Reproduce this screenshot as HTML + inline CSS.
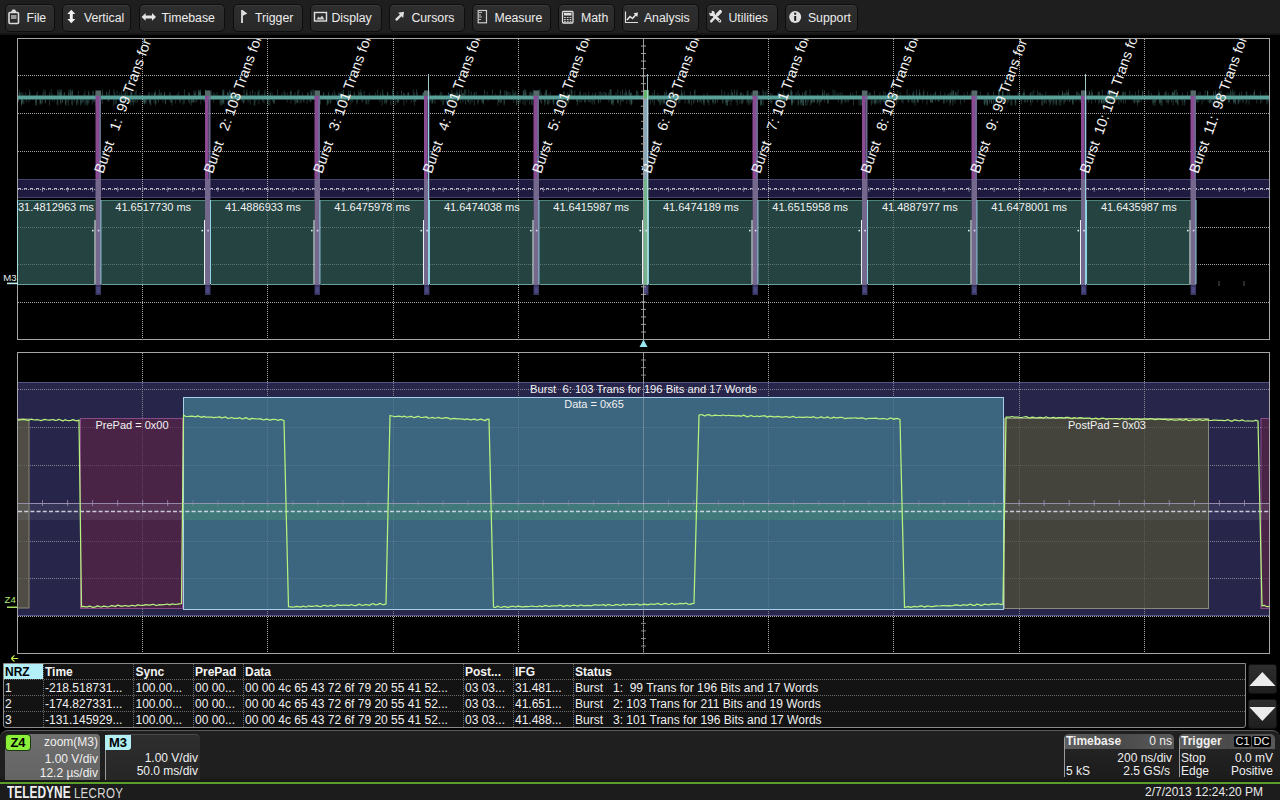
<!DOCTYPE html>
<html><head><meta charset="utf-8">
<style>
*{margin:0;padding:0;box-sizing:border-box}
html,body{width:1280px;height:800px;overflow:hidden;background:#000;font-family:"Liberation Sans",sans-serif;color:#eee}
#menubar{position:absolute;left:0;top:0;width:1280px;height:35px;background:#1e1e1e;border-bottom:2px solid #151515}
.btn{position:absolute;top:4px;height:27.5px;background:linear-gradient(#2e2e2e,#2b2b2b 60%,#272727);border:1.5px solid #0d0d0d;border-radius:5px;box-shadow:inset 0 1px 0 #3c3c3c}
.bt{position:absolute;top:11px;font-size:12.3px;line-height:14px;color:#ececec;white-space:pre}

#tbl{position:absolute;left:3px;top:663px;width:1243px;height:65px;background:#131313;border:1px solid #8a8a8a;border-radius:0 0 3px 3px}
.th{position:absolute;top:665px;font-size:12px;font-weight:bold;line-height:14px;white-space:pre}
.td{position:absolute;font-size:12px;line-height:15px;color:#f0f0f0;white-space:pre}
.vsep{position:absolute;top:664px;height:63px;width:0;border-left:1px dotted #6a6a6a}
.hsep{position:absolute;left:4px;width:1241px;height:0;border-top:1px dotted #6a6a6a}

#bpanel{position:absolute;left:0;top:729.5px;width:1280px;height:52.5px;background:linear-gradient(#1f1f1f 88%,#151515);border-top:1px solid #5a5a5a;border-radius:8px 8px 0 0}
#z4box{position:absolute;left:5px;top:734px;width:95px;height:46px;background:linear-gradient(#6e6e6e,#646464);border-radius:4px 4px 0 0}
#m3box{position:absolute;left:105px;top:734px;width:95px;height:46px;background:linear-gradient(#2e2e2e,#262626);border-radius:5px 5px 0 0;border-left:1px solid #9a9a9a;border-top:1px solid #4a4a4a}
.badge{position:absolute;height:15px;font-size:13px;font-weight:bold;color:#000;text-align:center;line-height:15px;border-radius:3px}
.rt{position:absolute;font-size:12px;color:#f0f0f0;white-space:pre;line-height:14px;text-align:right}
.lt{position:absolute;font-size:12px;color:#f0f0f0;white-space:pre;line-height:14px}
.ibox{position:absolute;top:734px;height:43px;background:linear-gradient(#262626,#1c1c1c);border-left:1px solid #9a9a9a;border-radius:5px 5px 0 0;overflow:hidden}
.ihead{position:absolute;left:0;top:0;width:100%;height:15px;background:linear-gradient(90deg,#5e5e5e,#4a4a4a 50%,#5a5a5a)}
.tag{position:absolute;top:736px;height:11px;background:#000;color:#f0f0f0;font-size:11px;line-height:11px;text-align:center;border-radius:2px}
#gline{position:absolute;left:0;top:782px;width:1280px;height:2px;background:#5c9e2a}
#footer{position:absolute;left:0;top:784px;width:1280px;height:16px;background:#1c1c1c}
#logo{position:absolute;left:7px;top:783.5px;font-size:16px;line-height:17px;color:#f0f0f0;transform:scaleX(.745);transform-origin:0 0;white-space:pre}
.sbtn{position:absolute;left:1248px;width:29px;height:30px;background:linear-gradient(#2e2e2e,#1e1e1e);border:1px solid #111;border-radius:3px}
.sbtn svg{position:absolute;left:0;top:0}
</style></head><body>
<div id="menubar">
<div class="btn" style="left:5px;width:49.5px"></div><div class="bt" style="left:26.4px">File</div>
<div class="btn" style="left:62px;width:69px"></div><div class="bt" style="left:83.9px">Vertical</div>
<div class="btn" style="left:138.5px;width:86.5px"></div><div class="bt" style="left:161.4px">Timebase</div>
<div class="btn" style="left:233px;width:69.5px"></div><div class="bt" style="left:254.9px">Trigger</div>
<div class="btn" style="left:309.5px;width:72.0px"></div><div class="bt" style="left:331.4px">Display</div>
<div class="btn" style="left:389px;width:75.5px"></div><div class="bt" style="left:411.4px">Cursors</div>
<div class="btn" style="left:471.5px;width:79.5px"></div><div class="bt" style="left:494.4px">Measure</div>
<div class="btn" style="left:558px;width:57px"></div><div class="bt" style="left:580.9px">Math</div>
<div class="btn" style="left:621.5px;width:77.0px"></div><div class="bt" style="left:643.9px">Analysis</div>
<div class="btn" style="left:706px;width:71.5px"></div><div class="bt" style="left:728.4px">Utilities</div>
<div class="btn" style="left:785px;width:73px"></div><div class="bt" style="left:807.9px">Support</div>
<svg width="1280" height="34" style="position:absolute;left:0;top:0">
<g fill="none" stroke="#dcdcdc" stroke-width="1.6">
<rect x="9" y="12.5" width="9.5" height="11" rx="1"/>
</g>
<path d="M11,12 L12.5,9.5 L15,9.5 L16.5,12 Z" fill="#dcdcdc"/>
<rect x="11" y="15" width="5.5" height="4" fill="#9a9a9a"/>
<path d="M71.3,9.8 L75.3,14 L72.8,14 L72.8,19 L75.3,19 L71.3,23.2 L67.3,19 L69.8,19 L69.8,14 L67.3,14 Z" fill="#f0f0f0"/>
<path d="M141.6,16.9 L145.6,13 L145.6,15.4 L152,15.4 L152,13 L156,16.9 L152,20.8 L152,18.4 L145.6,18.4 L145.6,20.8 Z" fill="#e6e6e6"/>
<path d="M242,10 L242,23" stroke="#e0e0e0" stroke-width="1.8"/>
<path d="M242.5,10 L247.3,13.5 L242.5,16 Z" fill="#e0e0e0"/>
<rect x="314.5" y="12.5" width="12" height="8.5" fill="none" stroke="#e0e0e0" stroke-width="1.4"/>
<path d="M316.5,19.5 L318.5,16.5 L320,18 L322,15.5 L324.5,19.5 Z" fill="#d0d0d0"/>
<path d="M404,11.8 L398,12.8 L400,14.5 L395,19.2 L396.8,21 L401.5,16.3 L403.2,18 Z" fill="#e0e0e0"/>
<rect x="478.2" y="10.5" width="8.3" height="12.3" fill="none" stroke="#cfcfcf" stroke-width="1.2"/>
<path d="M479,12.5 h3 M479,15 h2 M479,17 h3 M479,19.5 h2" stroke="#bdbdbd" stroke-width="1"/>
<rect x="562.5" y="11.5" width="10.5" height="11.5" rx="1" fill="none" stroke="#e0e0e0" stroke-width="1.3"/>
<rect x="564" y="13" width="7.5" height="2.5" fill="#e0e0e0"/>
<path d="M564,17.5 h7.5 M564,19.5 h7.5 M564,21.3 h7.5" stroke="#d0d0d0" stroke-width="1" stroke-dasharray="1.8 1"/>
<path d="M625.5,11.5 L625.5,22.5 L638,22.5" fill="none" stroke="#dcdcdc" stroke-width="1.2"/>
<path d="M627,20 L630,16.5 L632.5,18.5 L636.5,14" fill="none" stroke="#e6e6e6" stroke-width="1.6"/>
<path d="M633.5,13.2 L638,12.5 L637.3,17 Z" fill="#e6e6e6"/>
<path d="M712.5,14 L719.8,21" stroke="#e4e4e4" stroke-width="3" stroke-linecap="round"/>
<circle cx="712" cy="13.4" r="2.7" fill="#e4e4e4"/>
<circle cx="710.6" cy="11.9" r="1.3" fill="#2c2c2c"/>
<circle cx="719.4" cy="20.5" r="0.8" fill="#2c2c2c"/>
<path d="M720.3,11.6 L717.4,14.6" stroke="#e4e4e4" stroke-width="3.4" stroke-linecap="round"/>
<path d="M715.8,16.2 L711.2,21.4" stroke="#e4e4e4" stroke-width="2.4" stroke-linecap="round"/>
<circle cx="795.2" cy="17" r="6" fill="#e0e0e0"/>
<rect x="794.2" y="16" width="2" height="4.8" fill="#1a1a1a"/>
<rect x="794.2" y="12.7" width="2" height="2" fill="#1a1a1a"/>
</svg>
</div>
<svg width="1280" height="800" viewBox="0 0 1280 800" style="position:absolute;left:0;top:0">
<defs>
<clipPath id="cu"><rect x="18" y="39" width="1251" height="300"/></clipPath>
<clipPath id="cl"><rect x="18" y="353" width="1251" height="300"/></clipPath>
</defs>
<style>
.gd{stroke:#b8b8b8;stroke-width:1;stroke-dasharray:1 1;opacity:.85}
.bd{fill:none;stroke:#a6a6a6;stroke-width:1}
.lbl{font-family:"Liberation Sans",sans-serif;fill:#f2f2f2}
</style>
<g clip-path="url(#cu)">
<rect x="17" y="179" width="1253" height="19" fill="#1f1b40"/>
<line x1="17" y1="179.5" x2="1270" y2="179.5" stroke="#46426e" stroke-width="1"/>
<line x1="17" y1="197.5" x2="1270" y2="197.5" stroke="#46426e" stroke-width="1"/>
<line x1="18" y1="188.5" x2="1269" y2="188.5" stroke="#b8b4d0" stroke-width="1" stroke-dasharray="3 3"/>
<line x1="17.5" y1="187" x2="17.5" y2="192" stroke="#9a96b8" stroke-width="1" opacity=".7"/>
<line x1="42.5" y1="187" x2="42.5" y2="192" stroke="#9a96b8" stroke-width="1" opacity=".7"/>
<line x1="67.6" y1="187" x2="67.6" y2="192" stroke="#9a96b8" stroke-width="1" opacity=".7"/>
<line x1="92.6" y1="187" x2="92.6" y2="192" stroke="#9a96b8" stroke-width="1" opacity=".7"/>
<line x1="117.7" y1="187" x2="117.7" y2="192" stroke="#9a96b8" stroke-width="1" opacity=".7"/>
<line x1="142.7" y1="187" x2="142.7" y2="192" stroke="#9a96b8" stroke-width="1" opacity=".7"/>
<line x1="167.7" y1="187" x2="167.7" y2="192" stroke="#9a96b8" stroke-width="1" opacity=".7"/>
<line x1="192.8" y1="187" x2="192.8" y2="192" stroke="#9a96b8" stroke-width="1" opacity=".7"/>
<line x1="217.8" y1="187" x2="217.8" y2="192" stroke="#9a96b8" stroke-width="1" opacity=".7"/>
<line x1="242.9" y1="187" x2="242.9" y2="192" stroke="#9a96b8" stroke-width="1" opacity=".7"/>
<line x1="267.9" y1="187" x2="267.9" y2="192" stroke="#9a96b8" stroke-width="1" opacity=".7"/>
<line x1="292.9" y1="187" x2="292.9" y2="192" stroke="#9a96b8" stroke-width="1" opacity=".7"/>
<line x1="318.0" y1="187" x2="318.0" y2="192" stroke="#9a96b8" stroke-width="1" opacity=".7"/>
<line x1="343.0" y1="187" x2="343.0" y2="192" stroke="#9a96b8" stroke-width="1" opacity=".7"/>
<line x1="368.1" y1="187" x2="368.1" y2="192" stroke="#9a96b8" stroke-width="1" opacity=".7"/>
<line x1="393.1" y1="187" x2="393.1" y2="192" stroke="#9a96b8" stroke-width="1" opacity=".7"/>
<line x1="418.1" y1="187" x2="418.1" y2="192" stroke="#9a96b8" stroke-width="1" opacity=".7"/>
<line x1="443.2" y1="187" x2="443.2" y2="192" stroke="#9a96b8" stroke-width="1" opacity=".7"/>
<line x1="468.2" y1="187" x2="468.2" y2="192" stroke="#9a96b8" stroke-width="1" opacity=".7"/>
<line x1="493.3" y1="187" x2="493.3" y2="192" stroke="#9a96b8" stroke-width="1" opacity=".7"/>
<line x1="518.3" y1="187" x2="518.3" y2="192" stroke="#9a96b8" stroke-width="1" opacity=".7"/>
<line x1="543.3" y1="187" x2="543.3" y2="192" stroke="#9a96b8" stroke-width="1" opacity=".7"/>
<line x1="568.4" y1="187" x2="568.4" y2="192" stroke="#9a96b8" stroke-width="1" opacity=".7"/>
<line x1="593.4" y1="187" x2="593.4" y2="192" stroke="#9a96b8" stroke-width="1" opacity=".7"/>
<line x1="618.5" y1="187" x2="618.5" y2="192" stroke="#9a96b8" stroke-width="1" opacity=".7"/>
<line x1="643.5" y1="187" x2="643.5" y2="192" stroke="#9a96b8" stroke-width="1" opacity=".7"/>
<line x1="668.5" y1="187" x2="668.5" y2="192" stroke="#9a96b8" stroke-width="1" opacity=".7"/>
<line x1="693.6" y1="187" x2="693.6" y2="192" stroke="#9a96b8" stroke-width="1" opacity=".7"/>
<line x1="718.6" y1="187" x2="718.6" y2="192" stroke="#9a96b8" stroke-width="1" opacity=".7"/>
<line x1="743.7" y1="187" x2="743.7" y2="192" stroke="#9a96b8" stroke-width="1" opacity=".7"/>
<line x1="768.7" y1="187" x2="768.7" y2="192" stroke="#9a96b8" stroke-width="1" opacity=".7"/>
<line x1="793.7" y1="187" x2="793.7" y2="192" stroke="#9a96b8" stroke-width="1" opacity=".7"/>
<line x1="818.8" y1="187" x2="818.8" y2="192" stroke="#9a96b8" stroke-width="1" opacity=".7"/>
<line x1="843.8" y1="187" x2="843.8" y2="192" stroke="#9a96b8" stroke-width="1" opacity=".7"/>
<line x1="868.9" y1="187" x2="868.9" y2="192" stroke="#9a96b8" stroke-width="1" opacity=".7"/>
<line x1="893.9" y1="187" x2="893.9" y2="192" stroke="#9a96b8" stroke-width="1" opacity=".7"/>
<line x1="918.9" y1="187" x2="918.9" y2="192" stroke="#9a96b8" stroke-width="1" opacity=".7"/>
<line x1="944.0" y1="187" x2="944.0" y2="192" stroke="#9a96b8" stroke-width="1" opacity=".7"/>
<line x1="969.0" y1="187" x2="969.0" y2="192" stroke="#9a96b8" stroke-width="1" opacity=".7"/>
<line x1="994.1" y1="187" x2="994.1" y2="192" stroke="#9a96b8" stroke-width="1" opacity=".7"/>
<line x1="1019.1" y1="187" x2="1019.1" y2="192" stroke="#9a96b8" stroke-width="1" opacity=".7"/>
<line x1="1044.1" y1="187" x2="1044.1" y2="192" stroke="#9a96b8" stroke-width="1" opacity=".7"/>
<line x1="1069.2" y1="187" x2="1069.2" y2="192" stroke="#9a96b8" stroke-width="1" opacity=".7"/>
<line x1="1094.2" y1="187" x2="1094.2" y2="192" stroke="#9a96b8" stroke-width="1" opacity=".7"/>
<line x1="1119.3" y1="187" x2="1119.3" y2="192" stroke="#9a96b8" stroke-width="1" opacity=".7"/>
<line x1="1144.3" y1="187" x2="1144.3" y2="192" stroke="#9a96b8" stroke-width="1" opacity=".7"/>
<line x1="1169.3" y1="187" x2="1169.3" y2="192" stroke="#9a96b8" stroke-width="1" opacity=".7"/>
<line x1="1194.4" y1="187" x2="1194.4" y2="192" stroke="#9a96b8" stroke-width="1" opacity=".7"/>
<line x1="1219.4" y1="187" x2="1219.4" y2="192" stroke="#9a96b8" stroke-width="1" opacity=".7"/>
<line x1="1244.5" y1="187" x2="1244.5" y2="192" stroke="#9a96b8" stroke-width="1" opacity=".7"/>
<line x1="1269.5" y1="187" x2="1269.5" y2="192" stroke="#9a96b8" stroke-width="1" opacity=".7"/>
<line x1="142.5" y1="39" x2="142.5" y2="339" class="gd"/>
<line x1="267.5" y1="39" x2="267.5" y2="339" class="gd"/>
<line x1="393.5" y1="39" x2="393.5" y2="339" class="gd"/>
<line x1="518.5" y1="39" x2="518.5" y2="339" class="gd"/>
<line x1="643.5" y1="39" x2="643.5" y2="339" class="gd"/>
<line x1="768.5" y1="39" x2="768.5" y2="339" class="gd"/>
<line x1="893.5" y1="39" x2="893.5" y2="339" class="gd"/>
<line x1="1019.5" y1="39" x2="1019.5" y2="339" class="gd"/>
<line x1="1144.5" y1="39" x2="1144.5" y2="339" class="gd"/>
<line x1="18" y1="75.5" x2="1269" y2="75.5" class="gd"/>
<line x1="18" y1="113.5" x2="1269" y2="113.5" class="gd"/>
<line x1="18" y1="151.5" x2="1269" y2="151.5" class="gd"/>
<line x1="18" y1="189.5" x2="1269" y2="189.5" class="gd"/>
<line x1="18" y1="227.5" x2="1269" y2="227.5" class="gd"/>
<line x1="18" y1="264.5" x2="1269" y2="264.5" class="gd"/>
<line x1="18" y1="302.5" x2="1269" y2="302.5" class="gd"/>
<rect x="17.5" y="200" width="78.0" height="85" fill="#244341"/>
<line x1="17.5" y1="200.5" x2="95.5" y2="200.5" stroke="#4f8480" stroke-width="1"/>
<line x1="17.5" y1="284.5" x2="95.5" y2="284.5" stroke="#6a9e9a" stroke-width="1"/>
<rect x="101.5" y="200" width="103.5" height="85" fill="#244341"/>
<line x1="101.5" y1="200.5" x2="205.0" y2="200.5" stroke="#4f8480" stroke-width="1"/>
<line x1="101.5" y1="284.5" x2="205.0" y2="284.5" stroke="#6a9e9a" stroke-width="1"/>
<rect x="211.0" y="200" width="103.5" height="85" fill="#244341"/>
<line x1="211.0" y1="200.5" x2="314.5" y2="200.5" stroke="#4f8480" stroke-width="1"/>
<line x1="211.0" y1="284.5" x2="314.5" y2="284.5" stroke="#6a9e9a" stroke-width="1"/>
<rect x="320.5" y="200" width="103.5" height="85" fill="#244341"/>
<line x1="320.5" y1="200.5" x2="424.0" y2="200.5" stroke="#4f8480" stroke-width="1"/>
<line x1="320.5" y1="284.5" x2="424.0" y2="284.5" stroke="#6a9e9a" stroke-width="1"/>
<rect x="430.0" y="200" width="103.5" height="85" fill="#244341"/>
<line x1="430.0" y1="200.5" x2="533.5" y2="200.5" stroke="#4f8480" stroke-width="1"/>
<line x1="430.0" y1="284.5" x2="533.5" y2="284.5" stroke="#6a9e9a" stroke-width="1"/>
<rect x="539.5" y="200" width="103.5" height="85" fill="#244341"/>
<line x1="539.5" y1="200.5" x2="643.0" y2="200.5" stroke="#4f8480" stroke-width="1"/>
<line x1="539.5" y1="284.5" x2="643.0" y2="284.5" stroke="#6a9e9a" stroke-width="1"/>
<rect x="649.0" y="200" width="103.5" height="85" fill="#244341"/>
<line x1="649.0" y1="200.5" x2="752.5" y2="200.5" stroke="#4f8480" stroke-width="1"/>
<line x1="649.0" y1="284.5" x2="752.5" y2="284.5" stroke="#6a9e9a" stroke-width="1"/>
<rect x="758.5" y="200" width="103.5" height="85" fill="#244341"/>
<line x1="758.5" y1="200.5" x2="862.0" y2="200.5" stroke="#4f8480" stroke-width="1"/>
<line x1="758.5" y1="284.5" x2="862.0" y2="284.5" stroke="#6a9e9a" stroke-width="1"/>
<rect x="868.0" y="200" width="103.5" height="85" fill="#244341"/>
<line x1="868.0" y1="200.5" x2="971.5" y2="200.5" stroke="#4f8480" stroke-width="1"/>
<line x1="868.0" y1="284.5" x2="971.5" y2="284.5" stroke="#6a9e9a" stroke-width="1"/>
<rect x="977.5" y="200" width="103.5" height="85" fill="#244341"/>
<line x1="977.5" y1="200.5" x2="1081.0" y2="200.5" stroke="#4f8480" stroke-width="1"/>
<line x1="977.5" y1="284.5" x2="1081.0" y2="284.5" stroke="#6a9e9a" stroke-width="1"/>
<rect x="1087.0" y="200" width="103.5" height="85" fill="#244341"/>
<line x1="1087.0" y1="200.5" x2="1190.5" y2="200.5" stroke="#4f8480" stroke-width="1"/>
<line x1="1087.0" y1="284.5" x2="1190.5" y2="284.5" stroke="#6a9e9a" stroke-width="1"/>
<line x1="142.5" y1="39" x2="142.5" y2="339" class="gd" style="opacity:.4"/>
<line x1="267.5" y1="39" x2="267.5" y2="339" class="gd" style="opacity:.4"/>
<line x1="393.5" y1="39" x2="393.5" y2="339" class="gd" style="opacity:.4"/>
<line x1="518.5" y1="39" x2="518.5" y2="339" class="gd" style="opacity:.4"/>
<line x1="643.5" y1="39" x2="643.5" y2="339" class="gd" style="opacity:.4"/>
<line x1="768.5" y1="39" x2="768.5" y2="339" class="gd" style="opacity:.4"/>
<line x1="893.5" y1="39" x2="893.5" y2="339" class="gd" style="opacity:.4"/>
<line x1="1019.5" y1="39" x2="1019.5" y2="339" class="gd" style="opacity:.4"/>
<line x1="1144.5" y1="39" x2="1144.5" y2="339" class="gd" style="opacity:.4"/>
<line x1="18" y1="75.5" x2="1269" y2="75.5" class="gd" style="opacity:.4"/>
<line x1="18" y1="113.5" x2="1269" y2="113.5" class="gd" style="opacity:.4"/>
<line x1="18" y1="151.5" x2="1269" y2="151.5" class="gd" style="opacity:.4"/>
<line x1="18" y1="189.5" x2="1269" y2="189.5" class="gd" style="opacity:.4"/>
<line x1="18" y1="227.5" x2="1269" y2="227.5" class="gd" style="opacity:.4"/>
<line x1="18" y1="264.5" x2="1269" y2="264.5" class="gd" style="opacity:.4"/>
<line x1="18" y1="302.5" x2="1269" y2="302.5" class="gd" style="opacity:.4"/>
<line x1="1219" y1="281" x2="1219" y2="286" stroke="#555" stroke-width="1"/><line x1="1244" y1="281" x2="1244" y2="286" stroke="#555" stroke-width="1"/>
<path d="M423.1 92.5v3M78.4 90.5v5M747.1 90.5v5M125.5 91.5v4M131.5 91.5v4M725.4 99.5v3M747.3 99.5v2M514.2 92.5v3M1091.9 92.5v3M694.4 90.5v5M1039.0 92.5v3M732.6 92.5v3M703.2 99.5v2M792.4 99.5v4M552.9 99.5v3M1173.2 92.5v3M1011.8 99.5v6M120.4 99.5v3M1112.8 89.5v6M779.8 93.5v2M541.1 92.5v3M629.7 99.5v2M115.1 99.5v5M1113.2 92.5v3M456.1 99.5v4M588.7 99.5v2M611.1 89.5v6M932.7 99.5v3M1260.4 91.5v4M500.6 89.5v6M1194.8 92.5v3M164.5 93.5v2M377.6 89.5v6M507.1 91.5v4M579.9 90.5v5M189.3 99.5v4M366.3 99.5v4M872.1 99.5v4M206.8 92.5v3M841.8 99.5v2M755.0 92.5v3M200.2 90.5v5M726.5 99.5v3M662.9 99.5v5M943.5 99.5v4M993.7 99.5v6M508.9 91.5v4M620.4 91.5v4M102.3 92.5v3M155.5 90.5v5M18.3 99.5v3M1205.1 90.5v5M1111.8 90.5v5M811.6 99.5v3M611.2 99.5v2M1260.4 99.5v4M408.1 92.5v3M446.6 99.5v3M883.8 90.5v5M1207.7 90.5v5M881.3 99.5v2M390.9 99.5v6M888.9 99.5v3M1154.2 99.5v3M684.3 90.5v5M297.0 99.5v3M1041.7 99.5v6M268.1 91.5v4M54.3 99.5v2M608.8 99.5v3M1214.6 99.5v4M922.6 99.5v3M474.2 92.5v3M606.1 92.5v3M798.7 99.5v5M617.8 89.5v6M822.6 89.5v6M504.1 99.5v6M616.0 92.5v3M813.4 99.5v2M1233.5 99.5v4M947.9 99.5v2M230.7 92.5v3M757.1 99.5v4M200.9 99.5v5M840.2 92.5v3M703.9 93.5v2M1232.6 89.5v6M955.6 92.5v3M1108.6 92.5v3M284.2 90.5v5M751.6 99.5v3M1061.6 99.5v2M460.6 99.5v4M1037.6 90.5v5M1166.1 90.5v5M207.9 90.5v5M568.6 99.5v3M988.8 92.5v3M610.3 89.5v6M95.3 99.5v6M712.9 99.5v2M89.1 92.5v3M984.1 99.5v5M52.9 93.5v2M784.3 99.5v5M267.5 99.5v3M685.1 99.5v4M327.8 99.5v5M1196.7 99.5v3M1134.8 99.5v3M189.6 93.5v2M413.3 89.5v6M109.5 89.5v6M171.1 99.5v3M823.0 92.5v3M1122.4 91.5v4M1209.6 99.5v4M221.7 99.5v6M220.0 99.5v4M523.2 91.5v4M416.5 89.5v6M440.8 91.5v4M40.6 99.5v3M387.6 93.5v2M1167.1 99.5v3M149.1 92.5v3M1151.3 92.5v3M180.1 99.5v4M863.6 92.5v3M689.3 99.5v5M894.2 93.5v2M1018.3 92.5v3M108.6 99.5v2M1020.8 99.5v2M296.2 99.5v3M585.7 99.5v3M540.6 99.5v3M72.1 89.5v6M154.9 92.5v3M244.6 99.5v3M682.4 92.5v3M643.6 92.5v3M1023.4 92.5v3M41.1 99.5v5M255.0 91.5v4M577.3 99.5v6M558.7 99.5v4M1129.8 90.5v5M287.2 92.5v3M1059.2 99.5v6M192.8 99.5v3M1065.1 93.5v2M944.9 92.5v3M87.3 99.5v6M1107.0 99.5v6M767.1 89.5v6M592.8 92.5v3M22.5 99.5v3M1234.8 90.5v5M61.1 92.5v3M246.9 92.5v3M611.8 99.5v5M328.5 93.5v2M1040.1 92.5v3M70.1 93.5v2M805.7 99.5v2M680.0 99.5v3M913.7 90.5v5M426.0 91.5v4M923.9 89.5v6M1049.9 99.5v6M802.8 99.5v6M650.4 99.5v5M729.2 99.5v2M748.7 99.5v6M885.4 92.5v3M70.4 89.5v6M149.3 99.5v4M803.3 99.5v6M323.9 92.5v3M1015.9 99.5v6M1141.2 99.5v2M100.6 99.5v6M1030.3 92.5v3M964.3 99.5v3M1238.6 99.5v4M114.0 89.5v6M76.5 99.5v6M114.9 92.5v3M833.1 89.5v6M728.3 99.5v2M625.7 89.5v6M290.3 91.5v4M664.2 99.5v4M977.7 90.5v5M1241.6 91.5v4M592.2 99.5v5M580.3 92.5v3M1164.6 92.5v3M131.0 99.5v6M1209.9 99.5v3M808.2 99.5v3M897.9 99.5v3M1114.1 91.5v4M22.5 99.5v4M525.2 89.5v6M448.3 92.5v3M432.5 99.5v3M1067.7 99.5v2M262.9 99.5v2M380.6 92.5v3M506.1 90.5v5M1175.7 99.5v3M369.1 99.5v2M375.3 92.5v3M350.4 90.5v5M985.3 99.5v4M1033.8 89.5v6M1113.5 99.5v5M918.2 99.5v2M532.0 99.5v5M824.3 99.5v3M1158.8 90.5v5M608.7 92.5v3M337.9 99.5v6M343.5 89.5v6M622.5 89.5v6M227.3 92.5v3M644.3 99.5v4M584.7 99.5v3M580.9 99.5v3M323.4 92.5v3M132.0 92.5v3M1030.5 99.5v3M955.8 91.5v4M951.0 92.5v3M441.1 99.5v2M736.4 92.5v3M647.7 99.5v6M1079.6 93.5v2M328.8 99.5v4M558.2 99.5v3M1110.0 93.5v2M549.9 99.5v4M630.8 93.5v2M1177.5 99.5v5M1234.3 99.5v3M298.0 99.5v3M871.3 99.5v6M1077.0 91.5v4M989.9 99.5v2M309.0 99.5v2M398.0 99.5v3M678.8 99.5v4M158.3 93.5v2M1198.4 92.5v3M297.7 90.5v5M690.4 91.5v4M413.8 99.5v3M311.7 92.5v3M533.2 89.5v6M45.3 99.5v4M827.6 93.5v2M852.9 92.5v3M60.7 99.5v3M471.3 91.5v4M1015.1 99.5v6M102.4 99.5v4M408.0 92.5v3M295.0 92.5v3M798.1 90.5v5M297.4 99.5v4M88.6 90.5v5M510.2 92.5v3M763.8 91.5v4M93.2 91.5v4M908.8 99.5v3M1265.9 92.5v3M250.1 99.5v5M57.9 99.5v6M1067.7 92.5v3M154.3 93.5v2M457.7 99.5v2M967.3 91.5v4M1045.8 91.5v4M900.3 92.5v3M1168.3 92.5v3M940.4 91.5v4M531.9 99.5v6M68.9 99.5v2M1023.0 93.5v2M952.9 90.5v5M358.7 90.5v5M951.8 89.5v6M362.8 99.5v2M763.1 99.5v6M99.7 92.5v3M913.2 99.5v4M501.5 99.5v3M1037.3 99.5v3M246.9 89.5v6M883.8 99.5v3M428.1 99.5v3M998.6 90.5v5M264.8 92.5v3M99.0 99.5v2M699.3 99.5v3M1123.2 93.5v2M123.2 93.5v2M1254.5 91.5v4M184.3 99.5v4M861.3 99.5v6M986.1 99.5v2M385.7 99.5v3M484.6 89.5v6M567.7 92.5v3M209.8 90.5v5M99.1 99.5v3M652.7 99.5v3M143.8 99.5v4M146.0 99.5v4M307.1 99.5v4M68.5 92.5v3M81.0 99.5v5M747.6 93.5v2M1101.5 99.5v4M987.5 99.5v6M150.3 99.5v5M455.5 93.5v2M194.9 99.5v3M65.8 99.5v6M272.5 99.5v2M529.7 92.5v3M408.6 92.5v3M638.0 91.5v4M144.8 99.5v4M211.3 90.5v5M222.8 89.5v6M1254.3 89.5v6M1210.4 99.5v3M1123.5 91.5v4M1099.2 99.5v3M506.8 91.5v4M25.4 92.5v3M1044.3 99.5v4M474.3 92.5v3M82.7 99.5v3M1156.2 99.5v2M1178.0 99.5v6M200.5 92.5v3M232.9 93.5v2M631.6 92.5v3M1065.5 99.5v2M621.9 99.5v2M814.1 99.5v2M794.0 99.5v3M1089.6 90.5v5M1076.8 91.5v4M290.9 99.5v4M213.8 92.5v3M327.1 99.5v6M258.9 99.5v5M859.0 99.5v6M165.3 99.5v5M1080.1 99.5v3M403.6 92.5v3M842.2 99.5v4M241.6 99.5v2M630.4 92.5v3M791.8 99.5v4M1032.0 91.5v4M178.7 91.5v4M1021.7 99.5v5M69.0 89.5v6M1171.6 99.5v3M657.9 99.5v2M1137.5 99.5v6M188.4 99.5v2M933.8 93.5v2M1246.1 91.5v4M1032.6 99.5v3M920.1 92.5v3M457.0 92.5v3M1139.6 99.5v3M589.0 99.5v3M1168.8 99.5v3M788.4 92.5v3M64.1 92.5v3M814.4 99.5v3M1138.2 99.5v3M348.7 90.5v5M1091.7 99.5v4M743.6 93.5v2M688.2 99.5v4M482.7 99.5v4M740.3 92.5v3M119.8 92.5v3M948.2 93.5v2M663.6 99.5v3M1249.1 99.5v5M1138.5 89.5v6M60.3 92.5v3M800.6 99.5v4M1138.3 99.5v3M784.3 93.5v2M21.3 92.5v3M672.4 90.5v5M748.1 90.5v5M476.2 91.5v4M35.7 99.5v3M582.0 99.5v2M1108.0 92.5v3M348.6 93.5v2M1044.9 99.5v3M741.7 99.5v5M935.6 92.5v3M18.5 99.5v2M525.9 92.5v3M1158.6 93.5v2M707.2 92.5v3M267.6 99.5v5M828.1 99.5v4M236.5 92.5v3M801.1 99.5v6M913.0 93.5v2M564.2 91.5v4M838.1 92.5v3M149.7 99.5v3M172.2 99.5v6M1197.5 99.5v3M350.8 99.5v5M875.9 99.5v5M387.8 92.5v3M652.8 92.5v3M313.4 89.5v6M217.1 92.5v3M504.3 90.5v5M1153.4 99.5v6M1246.1 99.5v5M1068.5 89.5v6M51.2 89.5v6M1124.8 92.5v3M750.3 99.5v5M198.9 93.5v2M796.1 92.5v3M195.4 93.5v2M191.1 99.5v6M890.0 89.5v6M1089.5 92.5v3M1212.2 99.5v5M100.5 99.5v6M152.0 92.5v3M60.4 89.5v6M958.0 89.5v6M142.9 99.5v2M826.5 92.5v3M548.1 93.5v2M1181.6 99.5v2M478.4 99.5v3M771.1 99.5v4M791.5 99.5v2M57.1 99.5v5M451.8 89.5v6M726.2 99.5v6M131.7 92.5v3M19.6 92.5v3M956.9 93.5v2M632.0 99.5v4M1050.5 99.5v4M1215.5 90.5v5M1198.8 99.5v3M1191.8 99.5v3M155.5 99.5v6M631.4 99.5v6M148.8 92.5v3M520.0 99.5v4M950.3 99.5v4M49.5 92.5v3M553.5 99.5v5M492.5 89.5v6M594.6 99.5v5M880.2 99.5v5M454.0 99.5v3M1103.9 99.5v4M946.2 99.5v3M880.0 99.5v3M175.7 99.5v4M889.4 90.5v5M395.2 99.5v6M790.3 89.5v6M327.7 99.5v3M454.1 92.5v3M254.8 99.5v6M223.9 89.5v6M498.7 99.5v3M935.3 91.5v4M154.7 93.5v2M1125.4 91.5v4M517.2 99.5v4M644.1 89.5v6M45.7 99.5v3M524.3 89.5v6M1085.0 99.5v6M955.1 99.5v4M853.5 99.5v6M986.3 99.5v6M304.0 99.5v3M585.8 92.5v3M894.5 91.5v4M518.6 99.5v6M330.8 99.5v4M42.6 99.5v4M845.0 99.5v3M428.4 93.5v2M630.8 93.5v2M697.7 99.5v3M1208.1 99.5v3M144.5 99.5v5M274.4 99.5v4M817.7 99.5v3M531.3 91.5v4M874.1 99.5v4M1184.8 99.5v6M462.7 93.5v2M495.7 93.5v2M541.6 99.5v4M862.3 90.5v5M298.8 89.5v6M1210.9 99.5v3M1220.0 91.5v4M179.8 99.5v2M811.5 99.5v4M919.6 92.5v3M817.1 99.5v4M386.2 99.5v5M993.6 91.5v4M1082.2 99.5v3M878.0 99.5v4M620.4 99.5v6M465.8 89.5v6M617.9 99.5v4M124.9 92.5v3M397.3 91.5v4M1053.7 99.5v3M193.6 99.5v3M36.7 93.5v2M108.1 92.5v3M145.0 99.5v3M250.3 91.5v4M209.0 99.5v4M228.1 99.5v6M995.4 99.5v6M704.2 99.5v6M264.9 89.5v6M116.3 99.5v4M164.3 93.5v2M311.0 99.5v3M715.1 99.5v4M198.7 91.5v4M223.9 99.5v5M26.3 99.5v3M721.8 89.5v6M600.7 91.5v4M1219.7 93.5v2M468.8 89.5v6M780.7 99.5v6M1267.7 99.5v2M624.3 92.5v3M916.4 89.5v6M136.2 89.5v6M611.6 99.5v5M1159.3 92.5v3M546.4 90.5v5M379.7 99.5v3M523.1 99.5v5M1110.1 99.5v3M836.9 93.5v2M414.7 92.5v3M1234.9 99.5v2M68.1 99.5v6M525.9 90.5v5M393.8 93.5v2M1046.3 99.5v4M841.2 99.5v5M783.3 90.5v5M860.8 99.5v6M869.9 92.5v3M810.6 99.5v6M144.8 99.5v3M545.4 99.5v2M838.3 99.5v3M191.5 99.5v3M340.8 92.5v3M60.8 93.5v2M820.8 99.5v2M671.2 99.5v2M544.8 99.5v6M576.5 99.5v2M760.9 99.5v6M612.8 99.5v4M121.7 91.5v4M207.9 93.5v2M29.7 89.5v6M1226.9 93.5v2M169.8 91.5v4M917.9 99.5v3M949.0 93.5v2M952.8 99.5v6M930.9 93.5v2M715.4 99.5v4M1184.4 99.5v3M83.9 93.5v2M36.4 99.5v6M791.4 91.5v4M930.5 99.5v3M1062.5 90.5v5M477.8 99.5v5M605.7 92.5v3M1015.5 99.5v3M223.2 99.5v4M991.4 99.5v4M999.6 90.5v5M368.2 99.5v5M897.8 90.5v5M775.9 99.5v2M770.0 99.5v3M1239.5 92.5v3M874.7 99.5v5M311.2 91.5v4M20.1 92.5v3M214.8 93.5v2M194.0 90.5v5M1238.2 99.5v5M1161.1 99.5v3M693.5 99.5v4M268.7 99.5v6M310.8 90.5v5M512.8 89.5v6M336.7 99.5v2M593.1 99.5v2M462.2 93.5v2M743.1 99.5v3M670.8 99.5v4M270.5 92.5v3M244.0 89.5v6M740.9 92.5v3M665.0 92.5v3M1172.2 91.5v4M150.8 99.5v6M120.3 99.5v3M449.5 99.5v5M135.7 99.5v3M1101.5 99.5v4M285.2 92.5v3M1202.1 99.5v5M1223.3 99.5v3M441.9 92.5v3M52.4 99.5v2M1107.2 99.5v4M1075.9 99.5v2M818.4 99.5v2M130.5 99.5v3M819.4 99.5v6M246.5 92.5v3M312.1 89.5v6M66.3 99.5v3M92.2 99.5v5M1065.4 93.5v2M660.2 99.5v6M1250.8 93.5v2M415.4 99.5v2M864.8 99.5v3M570.0 89.5v6M423.2 92.5v3M487.1 91.5v4M316.3 99.5v3M1134.1 99.5v4M262.1 93.5v2M1059.9 99.5v2M1102.3 89.5v6M577.5 99.5v2M499.7 99.5v2M583.9 92.5v3M310.6 99.5v2M196.6 99.5v3M243.5 99.5v4M199.0 92.5v3M533.1 92.5v3M732.3 92.5v3M227.9 91.5v4M588.7 91.5v4M1242.3 99.5v2M1003.3 99.5v3M1062.9 93.5v2M270.2 92.5v3M345.2 99.5v3M140.1 92.5v3M220.9 99.5v6M198.6 89.5v6M1027.6 99.5v3M572.2 90.5v5M468.5 99.5v2M291.0 90.5v5M1073.1 99.5v5M908.2 99.5v3M1055.0 99.5v5M970.4 92.5v3M784.2 99.5v6M258.4 92.5v3M100.2 99.5v6M1070.2 99.5v2M452.9 99.5v3M1099.5 91.5v4M530.3 91.5v4M850.5 92.5v3M1058.4 92.5v3M896.5 99.5v5M23.8 99.5v5M1229.9 93.5v2M912.0 99.5v3M1104.0 99.5v5M94.6 99.5v2M637.0 90.5v5M1024.4 92.5v3M1228.3 99.5v3M228.0 92.5v3M1040.3 93.5v2M1176.8 89.5v6M40.1 99.5v5M598.4 99.5v3M146.7 99.5v2M74.5 99.5v2M751.0 92.5v3M170.1 99.5v3M302.5 92.5v3M734.6 89.5v6M1204.2 99.5v2M504.3 99.5v4M772.1 93.5v2M1195.6 92.5v3M318.7 99.5v3M1072.6 99.5v5M1159.9 99.5v4M85.0 90.5v5M868.9 92.5v3M546.1 89.5v6M154.4 92.5v3M559.7 99.5v5M300.1 99.5v4M989.5 99.5v4M1030.4 93.5v2M820.6 99.5v3M798.0 99.5v6M1174.4 90.5v5M170.2 93.5v2M1207.5 92.5v3M452.8 92.5v3M761.5 99.5v5M123.7 99.5v5M203.7 99.5v2M1125.4 99.5v4M360.9 89.5v6M701.4 99.5v4M731.3 89.5v6M704.3 99.5v3M703.6 99.5v5M1042.3 93.5v2M295.2 99.5v5M1231.0 91.5v4M459.2 92.5v3M425.2 92.5v3M1253.4 92.5v3M45.3 90.5v5M1108.0 99.5v4M664.8 91.5v4M972.3 90.5v5M1218.1 99.5v6M539.4 89.5v6M862.9 99.5v5M364.2 90.5v5M1089.2 91.5v4M807.0 99.5v6M177.2 93.5v2M975.9 90.5v5M515.3 90.5v5M1081.3 99.5v3M777.8 99.5v4M884.5 99.5v3M384.4 99.5v4M762.9 89.5v6M1002.6 91.5v4M393.3 90.5v5M199.4 90.5v5M308.2 92.5v3M1073.1 99.5v3M273.6 99.5v4M1213.8 93.5v2M724.7 91.5v4M689.1 99.5v3M1266.9 99.5v5M927.6 91.5v4M465.5 99.5v5M584.8 99.5v2M675.1 93.5v2M644.6 99.5v6M736.1 99.5v3M626.9 99.5v4M1142.8 90.5v5M681.2 93.5v2M415.9 99.5v2M659.3 99.5v2M386.9 99.5v3M1256.8 99.5v4M673.6 90.5v5M1135.3 91.5v4M806.3 90.5v5M730.9 99.5v6M70.9 91.5v4M21.5 99.5v6M22.9 92.5v3M141.2 99.5v2M264.0 99.5v4M727.4 99.5v6M661.4 99.5v3M532.3 93.5v2M666.5 90.5v5M143.2 99.5v3M631.5 99.5v4M1027.1 99.5v2M874.4 90.5v5M913.0 92.5v3M59.1 89.5v6M1148.7 90.5v5M257.8 90.5v5M86.4 99.5v4M1218.5 91.5v4M316.1 92.5v3M1182.5 92.5v3M1142.5 91.5v4M771.8 99.5v4M102.5 89.5v6M916.8 92.5v3M516.6 99.5v6M1009.7 92.5v3M230.6 91.5v4M1233.4 92.5v3M472.0 99.5v3M500.4 99.5v4M1220.5 99.5v4M457.4 92.5v3M602.2 92.5v3M61.7 89.5v6M1024.9 99.5v3M133.9 99.5v3M1003.1 90.5v5M1064.2 92.5v3M459.5 89.5v6M805.3 90.5v5M1207.6 90.5v5M1091.8 89.5v6M901.8 99.5v3M568.9 99.5v3M523.6 90.5v5M1109.4 99.5v2M132.4 99.5v3M974.8 99.5v2M728.2 92.5v3M907.1 89.5v6M1082.6 92.5v3M1133.0 99.5v2M470.2 99.5v5M259.2 89.5v6M301.3 99.5v3M517.1 92.5v3M1155.1 99.5v6M1095.5 99.5v3M238.7 99.5v3M848.2 99.5v3M49.6 99.5v6M328.8 91.5v4M804.7 92.5v3M356.9 99.5v5M909.4 93.5v2M779.3 91.5v4M397.1 99.5v4M709.0 99.5v6M242.8 99.5v3M914.5 99.5v3M856.3 90.5v5M19.2 89.5v6M71.7 99.5v5M77.2 99.5v3M64.5 92.5v3M1162.0 99.5v6M540.0 89.5v6M953.2 92.5v3M130.5 91.5v4M443.7 99.5v5M1056.3 99.5v6M654.3 99.5v6M553.9 99.5v5M991.6 99.5v4M72.7 99.5v6M717.5 99.5v3M1230.7 89.5v6M343.6 93.5v2M452.4 93.5v2M406.5 99.5v3M626.5 91.5v4M320.4 99.5v5M184.5 89.5v6M392.5 89.5v6M722.6 99.5v3M165.6 99.5v4M229.7 89.5v6M1243.1 99.5v4M161.2 92.5v3M626.7 93.5v2M369.4 92.5v3M404.5 93.5v2M574.8 90.5v5M228.3 93.5v2M604.1 91.5v4M915.1 99.5v6M154.1 99.5v4M628.9 90.5v5M467.5 99.5v2M803.3 99.5v6M332.5 92.5v3M953.1 99.5v2M1068.3 92.5v3M1221.5 99.5v5M1177.3 92.5v3M917.3 99.5v3M426.7 99.5v3M463.7 92.5v3M707.5 99.5v3M335.2 93.5v2M727.2 99.5v6M1268.9 99.5v4M1200.1 91.5v4M932.2 99.5v3M801.7 99.5v3M222.7 99.5v4M520.1 99.5v2M617.7 99.5v3M21.5 99.5v5M1002.4 91.5v4M108.1 99.5v2M544.9 92.5v3M29.0 99.5v3M223.7 92.5v3M1024.0 89.5v6M262.5 99.5v2M664.5 99.5v4M1154.8 99.5v3M1221.2 90.5v5M1030.9 99.5v6M780.0 99.5v3M544.8 99.5v3M827.8 99.5v3M681.5 89.5v6M254.2 99.5v6M882.9 99.5v3M483.4 99.5v5M468.4 99.5v3M513.8 93.5v2M1229.6 99.5v3M158.5 99.5v3M252.6 89.5v6M630.1 99.5v5M695.1 89.5v6M660.0 99.5v5M1083.3 89.5v6M567.8 99.5v5M912.0 99.5v2M1219.4 90.5v5M1056.6 99.5v4M1228.9 99.5v3M987.5 92.5v3M792.1 91.5v4M483.8 99.5v2M1213.5 91.5v4M903.0 99.5v4M127.7 99.5v3M1165.8 92.5v3M950.5 99.5v3M938.8 99.5v2M171.5 99.5v3M674.4 99.5v3M72.4 90.5v5M463.0 99.5v3M159.3 89.5v6M461.3 89.5v6M1066.5 90.5v5M1007.8 91.5v4M1019.7 92.5v3M1182.8 99.5v6M1064.1 99.5v5M691.6 99.5v6M354.2 91.5v4M446.3 99.5v3M623.4 99.5v2M62.4 99.5v3M824.5 90.5v5M613.2 99.5v3M579.2 99.5v3M782.2 93.5v2M678.9 99.5v3M755.1 93.5v2M1042.8 99.5v6M739.9 99.5v4M411.3 99.5v3M435.6 93.5v2M1114.2 90.5v5M200.4 89.5v6M498.9 99.5v2M345.8 99.5v5M749.1 99.5v3M60.7 99.5v5M137.2 99.5v3M810.0 89.5v6M1008.7 99.5v3M1192.2 89.5v6M1222.7 99.5v3M654.6 89.5v6M1110.0 89.5v6M93.6 99.5v3M1123.5 99.5v4M1136.6 99.5v3M206.7 92.5v3M1107.6 91.5v4M513.5 99.5v3M752.1 92.5v3M403.9 99.5v6M842.2 92.5v3M256.0 99.5v2M398.6 99.5v3M464.6 89.5v6M1104.3 99.5v2M417.4 92.5v3M340.2 99.5v2M801.7 99.5v3M291.1 91.5v4M1134.9 99.5v3M828.8 92.5v3M89.1 99.5v3M117.2 90.5v5M189.0 92.5v3M821.7 99.5v2M1172.5 92.5v3M1103.5 99.5v2M525.1 99.5v6M236.3 99.5v4M127.1 90.5v5M636.4 90.5v5M1194.2 93.5v2M414.4 99.5v6M88.1 99.5v5M1062.5 92.5v3M213.4 99.5v3M1069.6 99.5v3M547.5 99.5v5M1101.2 99.5v3M770.6 92.5v3M792.0 99.5v6M57.6 89.5v6M984.5 99.5v6M366.1 99.5v5M360.7 92.5v3M613.2 99.5v6M1240.0 99.5v3M303.4 99.5v2M799.4 93.5v2M645.8 99.5v5M342.2 90.5v5M204.8 99.5v3M1088.5 99.5v3M456.9 89.5v6M1246.9 91.5v4M1159.4 99.5v4M423.1 93.5v2M935.5 99.5v2M1161.0 99.5v6M93.0 90.5v5M1152.7 99.5v4M802.5 92.5v3M44.0 89.5v6M307.5 92.5v3M550.4 92.5v3M1261.9 99.5v3M1007.3 99.5v4M1105.4 99.5v3M188.8 92.5v3M432.7 99.5v4M330.4 99.5v3M765.6 91.5v4M83.2 99.5v3M938.1 99.5v2M1098.0 92.5v3M192.9 99.5v3M1025.1 99.5v3M29.8 92.5v3M938.8 99.5v2M599.1 91.5v4M442.8 99.5v6M1121.3 99.5v2M269.9 99.5v6M65.4 99.5v5M737.1 89.5v6M42.9 92.5v3M156.0 99.5v4M675.3 93.5v2M875.4 99.5v3M700.4 99.5v2M1068.3 93.5v2M287.1 99.5v3M359.5 92.5v3M354.5 93.5v2M77.9 99.5v5M352.3 99.5v3M835.0 90.5v5M431.8 99.5v4M1111.5 89.5v6M545.9 90.5v5M1235.1 99.5v4M1121.0 99.5v3M812.4 99.5v3M1176.8 99.5v3M931.2 99.5v3M847.9 99.5v2M998.7 89.5v6M886.4 99.5v3M571.5 89.5v6M1233.5 99.5v2M827.8 99.5v4M759.0 91.5v4M805.5 99.5v6M462.4 93.5v2M676.4 99.5v5M1051.6 99.5v2M697.4 99.5v3M975.5 99.5v3M610.1 89.5v6M755.5 90.5v5M195.8 90.5v5M274.3 99.5v3M316.5 92.5v3M845.9 99.5v3M1053.1 99.5v6M72.1 91.5v4M1098.4 91.5v4M210.5 92.5v3M474.3 99.5v6M670.2 99.5v4M362.0 99.5v3M887.5 99.5v4M932.1 99.5v3M205.5 89.5v6M629.5 89.5v6M481.8 99.5v3M334.3 90.5v5M731.8 99.5v2M401.5 90.5v5M423.3 92.5v3M566.0 99.5v5M1092.5 92.5v3M1216.9 99.5v3M482.9 99.5v2M488.0 99.5v2M387.4 91.5v4M777.9 92.5v3M500.1 90.5v5M791.8 99.5v6M97.3 92.5v3M106.5 91.5v4M675.8 99.5v4M822.4 93.5v2M722.9 99.5v4M563.6 91.5v4M99.4 99.5v4M658.3 99.5v2M944.3 99.5v4M1176.1 99.5v3M980.3 91.5v4M294.1 99.5v2M37.4 91.5v4M960.4 99.5v5M1048.8 99.5v3M622.0 99.5v2M953.7 90.5v5M527.1 99.5v2M200.1 92.5v3M1246.8 99.5v3M361.6 92.5v3M498.0 99.5v6M713.2 99.5v5M870.0 92.5v3M1102.3 99.5v4M339.6 92.5v3M277.6 89.5v6M598.7 99.5v4M194.7 92.5v3M1168.1 99.5v5M930.3 99.5v2M529.6 99.5v5M62.2 99.5v3M382.7 89.5v6M1235.4 99.5v5M1187.5 91.5v4M272.2 92.5v3M817.7 93.5v2M1118.8 99.5v5M35.8 99.5v6M1019.7 91.5v4M919.3 89.5v6M282.0 92.5v3M1166.2 99.5v3M600.5 99.5v3M1207.5 91.5v4M1060.8 99.5v6M876.1 99.5v3M1173.7 92.5v3M1064.0 99.5v3M1112.3 99.5v3M917.9 99.5v3M423.8 92.5v3M1018.0 92.5v3M59.2 91.5v4M382.1 99.5v6M135.1 91.5v4M248.1 99.5v3M161.1 92.5v3M1173.1 99.5v6M676.4 99.5v3M40.2 99.5v4M1160.1 99.5v3M1098.9 99.5v5M964.1 92.5v3M357.2 99.5v3M393.1 99.5v5M1228.2 92.5v3M208.4 92.5v3M434.8 99.5v4M430.3 92.5v3M1003.4 99.5v3M923.3 91.5v4M708.0 99.5v3M595.2 93.5v2M742.6 99.5v4M183.1 99.5v5M113.4 99.5v6M223.0 99.5v3M130.6 99.5v2M1110.7 91.5v4M344.9 99.5v2M164.5 91.5v4M694.8 99.5v3M223.2 90.5v5M338.5 92.5v3M712.7 99.5v3M927.0 99.5v5M1132.2 93.5v2M85.1 99.5v6M879.9 92.5v3M232.3 99.5v3M548.4 99.5v5M383.2 93.5v2M741.7 92.5v3M987.5 99.5v5M95.7 92.5v3M440.0 93.5v2M791.4 89.5v6M397.8 99.5v2M595.7 92.5v3M1194.3 99.5v4M58.3 92.5v3M657.8 92.5v3M448.7 92.5v3M1175.0 89.5v6M1238.9 99.5v2M618.1 99.5v4M430.8 99.5v2M814.1 99.5v3M81.0 99.5v3M133.6 99.5v6M747.1 99.5v4M950.7 92.5v3M885.8 99.5v3M949.9 99.5v6M562.6 99.5v6M1107.4 99.5v3M760.6 99.5v6M162.9 99.5v3M1078.2 92.5v3M590.8 99.5v3M737.3 99.5v6M80.8 99.5v6M1010.9 99.5v6" stroke="#4a7c78" stroke-width="1" opacity=".42" fill="none"/>
<rect x="17" y="95.5" width="1253" height="4" fill="#58a098"/>
<rect x="95.5" y="90.5" width="5.5" height="6" fill="#566a6c"/>
<rect x="95.5" y="96" width="3.5" height="83" fill="#8a4b93"/>
<rect x="99.0" y="96" width="2" height="83" fill="#6c6690"/>
<rect x="95.5" y="179" width="5.5" height="106" fill="#74688c"/>
<rect x="95.5" y="285" width="5.5" height="10" fill="#3a3662"/>
<rect x="92.0" y="229.8" width="1.6" height="1.6" fill="#d8f0f0"/>
<rect x="97.8" y="229.8" width="1.6" height="1.6" fill="#e0e0f0"/>
<rect x="96.5" y="287" width="3.5" height="6" fill="#4a4880"/>
<line x1="95.0" y1="220" x2="95.0" y2="284" stroke="#e8f0f0" stroke-width="1"/>
<line x1="101.0" y1="200" x2="101.0" y2="284" stroke="#8fd4e4" stroke-width="1"/>
<rect x="205.0" y="90.5" width="5.5" height="6" fill="#566a6c"/>
<rect x="205.0" y="96" width="3.5" height="83" fill="#8a4b93"/>
<rect x="208.5" y="96" width="2" height="83" fill="#6c6690"/>
<rect x="205.0" y="179" width="5.5" height="106" fill="#74688c"/>
<rect x="205.0" y="285" width="5.5" height="10" fill="#3a3662"/>
<rect x="201.5" y="229.8" width="1.6" height="1.6" fill="#d8f0f0"/>
<rect x="207.3" y="229.8" width="1.6" height="1.6" fill="#e0e0f0"/>
<rect x="206.0" y="287" width="3.5" height="6" fill="#4a4880"/>
<line x1="204.5" y1="220" x2="204.5" y2="284" stroke="#e8f0f0" stroke-width="1"/>
<line x1="210.5" y1="200" x2="210.5" y2="284" stroke="#8fd4e4" stroke-width="1"/>
<rect x="314.5" y="90.5" width="5.5" height="6" fill="#566a6c"/>
<rect x="314.5" y="96" width="3.5" height="83" fill="#8a4b93"/>
<rect x="318.0" y="96" width="2" height="83" fill="#6c6690"/>
<rect x="314.5" y="179" width="5.5" height="106" fill="#74688c"/>
<rect x="314.5" y="285" width="5.5" height="10" fill="#3a3662"/>
<rect x="311.0" y="229.8" width="1.6" height="1.6" fill="#d8f0f0"/>
<rect x="316.8" y="229.8" width="1.6" height="1.6" fill="#e0e0f0"/>
<rect x="315.5" y="287" width="3.5" height="6" fill="#4a4880"/>
<line x1="314.0" y1="220" x2="314.0" y2="284" stroke="#e8f0f0" stroke-width="1"/>
<line x1="320.0" y1="200" x2="320.0" y2="284" stroke="#8fd4e4" stroke-width="1"/>
<rect x="424.0" y="90.5" width="5.5" height="6" fill="#566a6c"/>
<rect x="424.0" y="96" width="3.5" height="83" fill="#8a4b93"/>
<rect x="427.5" y="96" width="2" height="83" fill="#6c6690"/>
<rect x="424.0" y="179" width="5.5" height="106" fill="#74688c"/>
<line x1="428.5" y1="74" x2="428.5" y2="96" stroke="#9cc8c8" stroke-width="1"/>
<line x1="428.5" y1="96" x2="428.5" y2="285" stroke="#90d0e0" stroke-width="1"/>
<rect x="424.0" y="285" width="5.5" height="10" fill="#3a3662"/>
<rect x="420.5" y="229.8" width="1.6" height="1.6" fill="#d8f0f0"/>
<rect x="426.3" y="229.8" width="1.6" height="1.6" fill="#e0e0f0"/>
<rect x="425.0" y="287" width="3.5" height="6" fill="#4a4880"/>
<line x1="423.5" y1="220" x2="423.5" y2="284" stroke="#e8f0f0" stroke-width="1"/>
<line x1="429.5" y1="200" x2="429.5" y2="284" stroke="#8fd4e4" stroke-width="1"/>
<rect x="533.5" y="90.5" width="5.5" height="6" fill="#566a6c"/>
<rect x="533.5" y="96" width="3.5" height="83" fill="#8a4b93"/>
<rect x="537.0" y="96" width="2" height="83" fill="#6c6690"/>
<rect x="533.5" y="179" width="5.5" height="106" fill="#74688c"/>
<rect x="533.5" y="285" width="5.5" height="10" fill="#3a3662"/>
<rect x="530.0" y="229.8" width="1.6" height="1.6" fill="#d8f0f0"/>
<rect x="535.8" y="229.8" width="1.6" height="1.6" fill="#e0e0f0"/>
<rect x="534.5" y="287" width="3.5" height="6" fill="#4a4880"/>
<line x1="533.0" y1="220" x2="533.0" y2="284" stroke="#e8f0f0" stroke-width="1"/>
<line x1="539.0" y1="200" x2="539.0" y2="284" stroke="#8fd4e4" stroke-width="1"/>
<rect x="643.0" y="90" width="5.5" height="89" fill="#88a4b8"/>
<rect x="643.0" y="179" width="5.5" height="106" fill="#74b48c"/>
<rect x="643.0" y="90" width="5.5" height="9" fill="#5cb868"/>
<line x1="647.5" y1="74" x2="647.5" y2="285" stroke="#c0e0e8" stroke-width="1" opacity=".8"/>
<rect x="643.0" y="285" width="5.5" height="10" fill="#3a3662"/>
<rect x="639.5" y="229.8" width="1.6" height="1.6" fill="#d8f0f0"/>
<rect x="645.3" y="229.8" width="1.6" height="1.6" fill="#e0e0f0"/>
<rect x="644.0" y="287" width="3.5" height="6" fill="#4a4880"/>
<line x1="642.5" y1="220" x2="642.5" y2="284" stroke="#e8f0f0" stroke-width="1"/>
<line x1="648.5" y1="200" x2="648.5" y2="284" stroke="#8fd4e4" stroke-width="1"/>
<rect x="752.5" y="90.5" width="5.5" height="6" fill="#566a6c"/>
<rect x="752.5" y="96" width="3.5" height="83" fill="#8a4b93"/>
<rect x="756.0" y="96" width="2" height="83" fill="#6c6690"/>
<rect x="752.5" y="179" width="5.5" height="106" fill="#74688c"/>
<rect x="752.5" y="285" width="5.5" height="10" fill="#3a3662"/>
<rect x="749.0" y="229.8" width="1.6" height="1.6" fill="#d8f0f0"/>
<rect x="754.8" y="229.8" width="1.6" height="1.6" fill="#e0e0f0"/>
<rect x="753.5" y="287" width="3.5" height="6" fill="#4a4880"/>
<line x1="752.0" y1="220" x2="752.0" y2="284" stroke="#e8f0f0" stroke-width="1"/>
<line x1="758.0" y1="200" x2="758.0" y2="284" stroke="#8fd4e4" stroke-width="1"/>
<rect x="862.0" y="90.5" width="5.5" height="6" fill="#566a6c"/>
<rect x="862.0" y="96" width="3.5" height="83" fill="#8a4b93"/>
<rect x="865.5" y="96" width="2" height="83" fill="#6c6690"/>
<rect x="862.0" y="179" width="5.5" height="106" fill="#74688c"/>
<rect x="862.0" y="285" width="5.5" height="10" fill="#3a3662"/>
<rect x="858.5" y="229.8" width="1.6" height="1.6" fill="#d8f0f0"/>
<rect x="864.3" y="229.8" width="1.6" height="1.6" fill="#e0e0f0"/>
<rect x="863.0" y="287" width="3.5" height="6" fill="#4a4880"/>
<line x1="861.5" y1="220" x2="861.5" y2="284" stroke="#e8f0f0" stroke-width="1"/>
<line x1="867.5" y1="200" x2="867.5" y2="284" stroke="#8fd4e4" stroke-width="1"/>
<rect x="971.5" y="90.5" width="5.5" height="6" fill="#566a6c"/>
<rect x="971.5" y="96" width="3.5" height="83" fill="#8a4b93"/>
<rect x="975.0" y="96" width="2" height="83" fill="#6c6690"/>
<rect x="971.5" y="179" width="5.5" height="106" fill="#74688c"/>
<rect x="971.5" y="285" width="5.5" height="10" fill="#3a3662"/>
<rect x="968.0" y="229.8" width="1.6" height="1.6" fill="#d8f0f0"/>
<rect x="973.8" y="229.8" width="1.6" height="1.6" fill="#e0e0f0"/>
<rect x="972.5" y="287" width="3.5" height="6" fill="#4a4880"/>
<line x1="971.0" y1="220" x2="971.0" y2="284" stroke="#e8f0f0" stroke-width="1"/>
<line x1="977.0" y1="200" x2="977.0" y2="284" stroke="#8fd4e4" stroke-width="1"/>
<rect x="1081.0" y="90.5" width="5.5" height="6" fill="#566a6c"/>
<rect x="1081.0" y="96" width="3.5" height="83" fill="#8a4b93"/>
<rect x="1084.5" y="96" width="2" height="83" fill="#6c6690"/>
<rect x="1081.0" y="179" width="5.5" height="106" fill="#74688c"/>
<line x1="1085.5" y1="74" x2="1085.5" y2="96" stroke="#9cc8c8" stroke-width="1"/>
<line x1="1085.5" y1="96" x2="1085.5" y2="285" stroke="#90d0e0" stroke-width="1"/>
<rect x="1081.0" y="285" width="5.5" height="10" fill="#3a3662"/>
<rect x="1077.5" y="229.8" width="1.6" height="1.6" fill="#d8f0f0"/>
<rect x="1083.3" y="229.8" width="1.6" height="1.6" fill="#e0e0f0"/>
<rect x="1082.0" y="287" width="3.5" height="6" fill="#4a4880"/>
<line x1="1080.5" y1="220" x2="1080.5" y2="284" stroke="#e8f0f0" stroke-width="1"/>
<line x1="1086.5" y1="200" x2="1086.5" y2="284" stroke="#8fd4e4" stroke-width="1"/>
<rect x="1190.5" y="90.5" width="5.5" height="6" fill="#566a6c"/>
<rect x="1190.5" y="96" width="3.5" height="83" fill="#8a4b93"/>
<rect x="1194.0" y="96" width="2" height="83" fill="#6c6690"/>
<rect x="1190.5" y="179" width="5.5" height="106" fill="#74688c"/>
<rect x="1190.5" y="285" width="5.5" height="10" fill="#3a3662"/>
<rect x="1187.0" y="229.8" width="1.6" height="1.6" fill="#d8f0f0"/>
<rect x="1192.8" y="229.8" width="1.6" height="1.6" fill="#e0e0f0"/>
<rect x="1191.5" y="287" width="3.5" height="6" fill="#4a4880"/>
<line x1="1190.0" y1="220" x2="1190.0" y2="284" stroke="#e8f0f0" stroke-width="1"/>
<line x1="1196.0" y1="200" x2="1196.0" y2="284" stroke="#8fd4e4" stroke-width="1"/>
<text x="18" y="211" class="lbl" font-size="11">31.4812963 ms</text>
<text x="153.2" y="211" class="lbl" font-size="11" text-anchor="middle">41.6517730 ms</text>
<text x="262.8" y="211" class="lbl" font-size="11" text-anchor="middle">41.4886933 ms</text>
<text x="372.2" y="211" class="lbl" font-size="11" text-anchor="middle">41.6475978 ms</text>
<text x="481.8" y="211" class="lbl" font-size="11" text-anchor="middle">41.6474038 ms</text>
<text x="591.2" y="211" class="lbl" font-size="11" text-anchor="middle">41.6415987 ms</text>
<text x="700.8" y="211" class="lbl" font-size="11" text-anchor="middle">41.6474189 ms</text>
<text x="810.2" y="211" class="lbl" font-size="11" text-anchor="middle">41.6515958 ms</text>
<text x="919.8" y="211" class="lbl" font-size="11" text-anchor="middle">41.4887977 ms</text>
<text x="1029.2" y="211" class="lbl" font-size="11" text-anchor="middle">41.6478001 ms</text>
<text x="1138.8" y="211" class="lbl" font-size="11" text-anchor="middle">41.6435987 ms</text>
<text x="0" y="0" class="lbl" font-size="14.3" transform="translate(103.0,174.3) rotate(-70)">Burst&#160;&#160;&#160;1:&#160;&#160;99 Trans for 196 Bits and 17 Words</text>
<text x="0" y="0" class="lbl" font-size="14.3" transform="translate(212.5,174.3) rotate(-70)">Burst&#160;&#160;&#160;2:&#160;103 Trans for 196 Bits and 17 Words</text>
<text x="0" y="0" class="lbl" font-size="14.3" transform="translate(322.0,174.3) rotate(-70)">Burst&#160;&#160;&#160;3:&#160;101 Trans for 196 Bits and 17 Words</text>
<text x="0" y="0" class="lbl" font-size="14.3" transform="translate(431.5,174.3) rotate(-70)">Burst&#160;&#160;&#160;4:&#160;101 Trans for 196 Bits and 17 Words</text>
<text x="0" y="0" class="lbl" font-size="14.3" transform="translate(541.0,174.3) rotate(-70)">Burst&#160;&#160;&#160;5:&#160;101 Trans for 196 Bits and 17 Words</text>
<text x="0" y="0" class="lbl" font-size="14.3" transform="translate(650.5,174.3) rotate(-70)">Burst&#160;&#160;&#160;6:&#160;103 Trans for 196 Bits and 17 Words</text>
<text x="0" y="0" class="lbl" font-size="14.3" transform="translate(760.0,174.3) rotate(-70)">Burst&#160;&#160;&#160;7:&#160;101 Trans for 196 Bits and 17 Words</text>
<text x="0" y="0" class="lbl" font-size="14.3" transform="translate(869.5,174.3) rotate(-70)">Burst&#160;&#160;&#160;8:&#160;103 Trans for 196 Bits and 17 Words</text>
<text x="0" y="0" class="lbl" font-size="14.3" transform="translate(979.0,174.3) rotate(-70)">Burst&#160;&#160;&#160;9:&#160;&#160;99 Trans for 196 Bits and 17 Words</text>
<text x="0" y="0" class="lbl" font-size="14.3" transform="translate(1088.5,174.3) rotate(-70)">Burst&#160;&#160;10:&#160;101 Trans for 196 Bits and 17 Words</text>
<text x="0" y="0" class="lbl" font-size="14.3" transform="translate(1198.0,174.3) rotate(-70)">Burst&#160;&#160;11:&#160;&#160;98 Trans for 196 Bits and 17 Words</text>
<line x1="643.5" y1="39" x2="643.5" y2="339" stroke="#a0a0a0" stroke-width="1"/>
<line x1="641" y1="38.5" x2="646" y2="38.5" stroke="#a0a0a0" stroke-width="1"/>
<line x1="641" y1="46.0" x2="646" y2="46.0" stroke="#a0a0a0" stroke-width="1"/>
<line x1="641" y1="53.5" x2="646" y2="53.5" stroke="#a0a0a0" stroke-width="1"/>
<line x1="641" y1="61.1" x2="646" y2="61.1" stroke="#a0a0a0" stroke-width="1"/>
<line x1="641" y1="68.6" x2="646" y2="68.6" stroke="#a0a0a0" stroke-width="1"/>
<line x1="641" y1="76.1" x2="646" y2="76.1" stroke="#a0a0a0" stroke-width="1"/>
<line x1="641" y1="83.7" x2="646" y2="83.7" stroke="#a0a0a0" stroke-width="1"/>
<line x1="641" y1="91.2" x2="646" y2="91.2" stroke="#a0a0a0" stroke-width="1"/>
<line x1="641" y1="98.7" x2="646" y2="98.7" stroke="#a0a0a0" stroke-width="1"/>
<line x1="641" y1="106.2" x2="646" y2="106.2" stroke="#a0a0a0" stroke-width="1"/>
<line x1="641" y1="113.8" x2="646" y2="113.8" stroke="#a0a0a0" stroke-width="1"/>
<line x1="641" y1="121.3" x2="646" y2="121.3" stroke="#a0a0a0" stroke-width="1"/>
<line x1="641" y1="128.8" x2="646" y2="128.8" stroke="#a0a0a0" stroke-width="1"/>
<line x1="641" y1="136.3" x2="646" y2="136.3" stroke="#a0a0a0" stroke-width="1"/>
<line x1="641" y1="143.9" x2="646" y2="143.9" stroke="#a0a0a0" stroke-width="1"/>
<line x1="641" y1="151.4" x2="646" y2="151.4" stroke="#a0a0a0" stroke-width="1"/>
<line x1="641" y1="158.9" x2="646" y2="158.9" stroke="#a0a0a0" stroke-width="1"/>
<line x1="641" y1="166.4" x2="646" y2="166.4" stroke="#a0a0a0" stroke-width="1"/>
<line x1="641" y1="174.0" x2="646" y2="174.0" stroke="#a0a0a0" stroke-width="1"/>
<line x1="641" y1="286.8" x2="646" y2="286.8" stroke="#a0a0a0" stroke-width="1"/>
<line x1="641" y1="294.4" x2="646" y2="294.4" stroke="#a0a0a0" stroke-width="1"/>
<line x1="641" y1="301.9" x2="646" y2="301.9" stroke="#a0a0a0" stroke-width="1"/>
<line x1="641" y1="309.4" x2="646" y2="309.4" stroke="#a0a0a0" stroke-width="1"/>
<line x1="641" y1="316.9" x2="646" y2="316.9" stroke="#a0a0a0" stroke-width="1"/>
<line x1="641" y1="324.4" x2="646" y2="324.4" stroke="#a0a0a0" stroke-width="1"/>
<line x1="641" y1="332.0" x2="646" y2="332.0" stroke="#a0a0a0" stroke-width="1"/>
</g>
<rect x="17.5" y="38.5" width="1252.0" height="301.0" class="bd"/>
<text x="3.2" y="280.5" class="lbl" font-size="9.6" style="fill:#e4ecec">M3</text>
<line x1="17.5" y1="200" x2="17.5" y2="285" stroke="#a8dcd8" stroke-width="1"/>
<rect x="7" y="282.6" width="10.5" height="1.6" fill="#c0f0f0"/>
<g clip-path="url(#cl)">
<line x1="142.5" y1="353" x2="142.5" y2="653" class="gd"/>
<line x1="267.5" y1="353" x2="267.5" y2="653" class="gd"/>
<line x1="393.5" y1="353" x2="393.5" y2="653" class="gd"/>
<line x1="518.5" y1="353" x2="518.5" y2="653" class="gd"/>
<line x1="643.5" y1="353" x2="643.5" y2="653" class="gd"/>
<line x1="768.5" y1="353" x2="768.5" y2="653" class="gd"/>
<line x1="893.5" y1="353" x2="893.5" y2="653" class="gd"/>
<line x1="1019.5" y1="353" x2="1019.5" y2="653" class="gd"/>
<line x1="1144.5" y1="353" x2="1144.5" y2="653" class="gd"/>
<line x1="18" y1="389.5" x2="1269" y2="389.5" class="gd"/>
<line x1="18" y1="427.5" x2="1269" y2="427.5" class="gd"/>
<line x1="18" y1="465.5" x2="1269" y2="465.5" class="gd"/>
<line x1="18" y1="503.5" x2="1269" y2="503.5" class="gd"/>
<line x1="18" y1="541.5" x2="1269" y2="541.5" class="gd"/>
<line x1="18" y1="578.5" x2="1269" y2="578.5" class="gd"/>
<line x1="18" y1="616.5" x2="1269" y2="616.5" class="gd"/>
<rect x="17" y="382" width="1253" height="234" fill="#27254a"/>
<rect x="17.5" y="382.5" width="1252" height="233" fill="none" stroke="#6a68a0" stroke-width="1" opacity=".7"/>
<line x1="142.5" y1="353" x2="142.5" y2="653" class="gd" style="opacity:.55"/>
<line x1="267.5" y1="353" x2="267.5" y2="653" class="gd" style="opacity:.55"/>
<line x1="393.5" y1="353" x2="393.5" y2="653" class="gd" style="opacity:.55"/>
<line x1="518.5" y1="353" x2="518.5" y2="653" class="gd" style="opacity:.55"/>
<line x1="643.5" y1="353" x2="643.5" y2="653" class="gd" style="opacity:.55"/>
<line x1="768.5" y1="353" x2="768.5" y2="653" class="gd" style="opacity:.55"/>
<line x1="893.5" y1="353" x2="893.5" y2="653" class="gd" style="opacity:.55"/>
<line x1="1019.5" y1="353" x2="1019.5" y2="653" class="gd" style="opacity:.55"/>
<line x1="1144.5" y1="353" x2="1144.5" y2="653" class="gd" style="opacity:.55"/>
<line x1="18" y1="389.5" x2="1269" y2="389.5" class="gd" style="opacity:.55"/>
<line x1="18" y1="427.5" x2="1269" y2="427.5" class="gd" style="opacity:.55"/>
<line x1="18" y1="465.5" x2="1269" y2="465.5" class="gd" style="opacity:.55"/>
<line x1="18" y1="503.5" x2="1269" y2="503.5" class="gd" style="opacity:.55"/>
<line x1="18" y1="541.5" x2="1269" y2="541.5" class="gd" style="opacity:.55"/>
<line x1="18" y1="578.5" x2="1269" y2="578.5" class="gd" style="opacity:.55"/>
<line x1="18" y1="616.5" x2="1269" y2="616.5" class="gd" style="opacity:.55"/>
<rect x="17" y="419" width="12" height="189" fill="#4e4c44" stroke="#8a8a70" stroke-width="1"/>
<rect x="80.5" y="418.5" width="102" height="190" fill="#4a2447" stroke="#8a4a8a" stroke-width="1"/>
<rect x="1004.5" y="418.5" width="204" height="190" fill="#44443c" stroke="#8a8a78" stroke-width="1"/>
<rect x="1261" y="418.5" width="12" height="190" fill="#4a2447" stroke="#8a4a8a" stroke-width="1"/>
<rect x="183.5" y="397.5" width="820" height="212" fill="#3c6580" stroke="#a8d0ea" stroke-width="1"/>
<line x1="142.5" y1="353" x2="142.5" y2="653" class="gd" style="opacity:.22"/>
<line x1="267.5" y1="353" x2="267.5" y2="653" class="gd" style="opacity:.22"/>
<line x1="393.5" y1="353" x2="393.5" y2="653" class="gd" style="opacity:.22"/>
<line x1="518.5" y1="353" x2="518.5" y2="653" class="gd" style="opacity:.22"/>
<line x1="643.5" y1="353" x2="643.5" y2="653" class="gd" style="opacity:.22"/>
<line x1="768.5" y1="353" x2="768.5" y2="653" class="gd" style="opacity:.22"/>
<line x1="893.5" y1="353" x2="893.5" y2="653" class="gd" style="opacity:.22"/>
<line x1="1019.5" y1="353" x2="1019.5" y2="653" class="gd" style="opacity:.22"/>
<line x1="1144.5" y1="353" x2="1144.5" y2="653" class="gd" style="opacity:.22"/>
<line x1="18" y1="389.5" x2="1269" y2="389.5" class="gd" style="opacity:.22"/>
<line x1="18" y1="427.5" x2="1269" y2="427.5" class="gd" style="opacity:.22"/>
<line x1="18" y1="465.5" x2="1269" y2="465.5" class="gd" style="opacity:.22"/>
<line x1="18" y1="503.5" x2="1269" y2="503.5" class="gd" style="opacity:.22"/>
<line x1="18" y1="541.5" x2="1269" y2="541.5" class="gd" style="opacity:.22"/>
<line x1="18" y1="578.5" x2="1269" y2="578.5" class="gd" style="opacity:.22"/>
<line x1="18" y1="616.5" x2="1269" y2="616.5" class="gd" style="opacity:.22"/>
<rect x="17" y="503" width="166" height="17" fill="#a0a0b8" fill-opacity=".13"/>
<rect x="1004" y="503" width="266" height="17" fill="#a0a0b8" fill-opacity=".12"/>
<rect x="183" y="503" width="821" height="17" fill="#50b070" fill-opacity=".28"/>
<line x1="18" y1="503.5" x2="1269" y2="503.5" stroke="#a89cc0" stroke-width="1" opacity=".75"/>
<line x1="18" y1="511.5" x2="1269" y2="511.5" stroke="#e0e4f0" stroke-width="1.3" stroke-dasharray="4 2.2" opacity=".85"/>
<line x1="17.5" y1="500" x2="17.5" y2="506" stroke="#a89cc0" stroke-width="1" opacity="0.7"/>
<line x1="42.5" y1="500" x2="42.5" y2="506" stroke="#a89cc0" stroke-width="1" opacity="0.7"/>
<line x1="67.6" y1="500" x2="67.6" y2="506" stroke="#a89cc0" stroke-width="1" opacity="0.7"/>
<line x1="92.6" y1="500" x2="92.6" y2="506" stroke="#a89cc0" stroke-width="1" opacity="0.7"/>
<line x1="117.7" y1="500" x2="117.7" y2="506" stroke="#a89cc0" stroke-width="1" opacity="0.7"/>
<line x1="142.7" y1="500" x2="142.7" y2="506" stroke="#a89cc0" stroke-width="1" opacity="0.7"/>
<line x1="167.7" y1="500" x2="167.7" y2="506" stroke="#a89cc0" stroke-width="1" opacity="0.7"/>
<line x1="192.8" y1="500" x2="192.8" y2="506" stroke="#a89cc0" stroke-width="1" opacity="0.35"/>
<line x1="217.8" y1="500" x2="217.8" y2="506" stroke="#a89cc0" stroke-width="1" opacity="0.35"/>
<line x1="242.9" y1="500" x2="242.9" y2="506" stroke="#a89cc0" stroke-width="1" opacity="0.35"/>
<line x1="267.9" y1="500" x2="267.9" y2="506" stroke="#a89cc0" stroke-width="1" opacity="0.35"/>
<line x1="292.9" y1="500" x2="292.9" y2="506" stroke="#a89cc0" stroke-width="1" opacity="0.35"/>
<line x1="318.0" y1="500" x2="318.0" y2="506" stroke="#a89cc0" stroke-width="1" opacity="0.35"/>
<line x1="343.0" y1="500" x2="343.0" y2="506" stroke="#a89cc0" stroke-width="1" opacity="0.35"/>
<line x1="368.1" y1="500" x2="368.1" y2="506" stroke="#a89cc0" stroke-width="1" opacity="0.35"/>
<line x1="393.1" y1="500" x2="393.1" y2="506" stroke="#a89cc0" stroke-width="1" opacity="0.35"/>
<line x1="418.1" y1="500" x2="418.1" y2="506" stroke="#a89cc0" stroke-width="1" opacity="0.35"/>
<line x1="443.2" y1="500" x2="443.2" y2="506" stroke="#a89cc0" stroke-width="1" opacity="0.35"/>
<line x1="468.2" y1="500" x2="468.2" y2="506" stroke="#a89cc0" stroke-width="1" opacity="0.35"/>
<line x1="493.3" y1="500" x2="493.3" y2="506" stroke="#a89cc0" stroke-width="1" opacity="0.35"/>
<line x1="518.3" y1="500" x2="518.3" y2="506" stroke="#a89cc0" stroke-width="1" opacity="0.35"/>
<line x1="543.3" y1="500" x2="543.3" y2="506" stroke="#a89cc0" stroke-width="1" opacity="0.35"/>
<line x1="568.4" y1="500" x2="568.4" y2="506" stroke="#a89cc0" stroke-width="1" opacity="0.35"/>
<line x1="593.4" y1="500" x2="593.4" y2="506" stroke="#a89cc0" stroke-width="1" opacity="0.35"/>
<line x1="618.5" y1="500" x2="618.5" y2="506" stroke="#a89cc0" stroke-width="1" opacity="0.35"/>
<line x1="643.5" y1="500" x2="643.5" y2="506" stroke="#a89cc0" stroke-width="1" opacity="0.35"/>
<line x1="668.5" y1="500" x2="668.5" y2="506" stroke="#a89cc0" stroke-width="1" opacity="0.35"/>
<line x1="693.6" y1="500" x2="693.6" y2="506" stroke="#a89cc0" stroke-width="1" opacity="0.35"/>
<line x1="718.6" y1="500" x2="718.6" y2="506" stroke="#a89cc0" stroke-width="1" opacity="0.35"/>
<line x1="743.7" y1="500" x2="743.7" y2="506" stroke="#a89cc0" stroke-width="1" opacity="0.35"/>
<line x1="768.7" y1="500" x2="768.7" y2="506" stroke="#a89cc0" stroke-width="1" opacity="0.35"/>
<line x1="793.7" y1="500" x2="793.7" y2="506" stroke="#a89cc0" stroke-width="1" opacity="0.35"/>
<line x1="818.8" y1="500" x2="818.8" y2="506" stroke="#a89cc0" stroke-width="1" opacity="0.35"/>
<line x1="843.8" y1="500" x2="843.8" y2="506" stroke="#a89cc0" stroke-width="1" opacity="0.35"/>
<line x1="868.9" y1="500" x2="868.9" y2="506" stroke="#a89cc0" stroke-width="1" opacity="0.35"/>
<line x1="893.9" y1="500" x2="893.9" y2="506" stroke="#a89cc0" stroke-width="1" opacity="0.35"/>
<line x1="918.9" y1="500" x2="918.9" y2="506" stroke="#a89cc0" stroke-width="1" opacity="0.35"/>
<line x1="944.0" y1="500" x2="944.0" y2="506" stroke="#a89cc0" stroke-width="1" opacity="0.35"/>
<line x1="969.0" y1="500" x2="969.0" y2="506" stroke="#a89cc0" stroke-width="1" opacity="0.35"/>
<line x1="994.1" y1="500" x2="994.1" y2="506" stroke="#a89cc0" stroke-width="1" opacity="0.35"/>
<line x1="1019.1" y1="500" x2="1019.1" y2="506" stroke="#a89cc0" stroke-width="1" opacity="0.7"/>
<line x1="1044.1" y1="500" x2="1044.1" y2="506" stroke="#a89cc0" stroke-width="1" opacity="0.7"/>
<line x1="1069.2" y1="500" x2="1069.2" y2="506" stroke="#a89cc0" stroke-width="1" opacity="0.7"/>
<line x1="1094.2" y1="500" x2="1094.2" y2="506" stroke="#a89cc0" stroke-width="1" opacity="0.7"/>
<line x1="1119.3" y1="500" x2="1119.3" y2="506" stroke="#a89cc0" stroke-width="1" opacity="0.7"/>
<line x1="1144.3" y1="500" x2="1144.3" y2="506" stroke="#a89cc0" stroke-width="1" opacity="0.7"/>
<line x1="1169.3" y1="500" x2="1169.3" y2="506" stroke="#a89cc0" stroke-width="1" opacity="0.7"/>
<line x1="1194.4" y1="500" x2="1194.4" y2="506" stroke="#a89cc0" stroke-width="1" opacity="0.7"/>
<line x1="1219.4" y1="500" x2="1219.4" y2="506" stroke="#a89cc0" stroke-width="1" opacity="0.7"/>
<line x1="1244.5" y1="500" x2="1244.5" y2="506" stroke="#a89cc0" stroke-width="1" opacity="0.7"/>
<line x1="1269.5" y1="500" x2="1269.5" y2="506" stroke="#a89cc0" stroke-width="1" opacity="0.7"/>
<path d="M17.0,418.9 L19.0,420.1 L21.0,419.7 L23.0,419.4 L25.0,419.6 L27.0,420.2 L29.0,420.1 L31.0,419.2 L33.0,419.7 L35.0,420.0 L37.0,419.6 L39.0,420.0 L41.0,420.7 L43.0,419.9 L45.0,419.4 L47.0,420.0 L49.0,420.1 L51.0,419.8 L53.0,419.5 L55.0,420.4 L57.0,420.1 L59.0,419.3 L61.0,420.2 L63.0,421.0 L65.0,419.7 L67.0,420.5 L69.0,420.7 L71.0,420.4 L73.0,419.7 L75.0,420.4 L77.0,420.9 L79.0,420.0 L81.5,606.8 L83.5,606.4 L85.5,606.8 L87.5,606.8 L89.5,606.2 L91.5,606.9 L93.5,607.4 L95.5,606.9 L97.5,605.9 L99.5,606.6 L101.5,607.0 L103.5,606.2 L105.5,606.3 L107.5,607.0 L109.5,606.5 L111.5,605.6 L113.5,605.9 L115.5,606.6 L117.5,605.1 L119.5,605.6 L121.5,606.3 L123.5,605.8 L125.5,605.5 L127.5,606.1 L129.5,606.2 L131.5,605.3 L133.5,605.6 L135.5,606.0 L137.5,604.8 L139.5,605.1 L141.5,605.3 L143.5,605.3 L145.5,604.7 L147.5,604.8 L149.5,605.2 L151.5,604.6 L153.5,604.3 L155.5,605.3 L157.5,605.1 L159.5,604.6 L161.5,604.8 L163.5,604.6 L165.5,604.4 L167.5,604.0 L169.5,604.9 L171.5,604.1 L173.5,604.1 L175.5,604.5 L177.5,604.2 L179.5,603.8 L181.5,603.5 L183.5,415.2 L185.5,416.3 L187.5,416.5 L189.5,416.3 L191.5,416.1 L193.6,416.4 L195.6,416.9 L197.6,415.9 L199.6,416.6 L201.6,417.4 L203.6,416.4 L205.6,417.2 L207.6,417.1 L209.6,417.1 L211.6,417.1 L213.7,417.6 L215.7,417.4 L217.7,417.2 L219.7,416.9 L221.7,418.0 L223.7,417.4 L225.7,416.9 L227.7,418.4 L229.7,418.2 L231.7,417.5 L233.8,418.3 L235.8,418.4 L237.8,418.4 L239.8,417.7 L241.8,418.9 L243.8,418.6 L245.8,417.6 L247.8,418.6 L249.8,419.4 L251.8,418.3 L253.8,418.7 L255.9,418.8 L257.9,419.0 L259.9,418.6 L261.9,419.3 L263.9,420.0 L265.9,419.1 L267.9,419.4 L269.9,420.1 L271.9,419.6 L273.9,419.3 L276.0,419.5 L278.0,420.5 L280.0,419.6 L282.0,419.7 L284.0,420.8 L288.5,606.7 L290.5,606.8 L292.6,607.1 L294.6,606.9 L296.6,606.4 L298.7,606.7 L300.7,607.1 L302.7,606.2 L304.8,606.6 L306.8,606.8 L308.8,605.8 L310.8,606.4 L312.9,606.3 L314.9,606.0 L316.9,605.7 L319.0,606.4 L321.0,606.7 L323.0,605.5 L325.1,605.3 L327.1,606.2 L329.1,605.9 L331.2,605.2 L333.2,606.2 L335.2,606.1 L337.2,604.7 L339.3,605.3 L341.3,605.4 L343.3,605.2 L345.4,605.1 L347.4,605.4 L349.4,605.4 L351.5,604.5 L353.5,605.5 L355.5,605.7 L357.6,604.9 L359.6,604.2 L361.6,605.3 L363.7,605.1 L365.7,604.5 L367.7,604.9 L369.8,605.3 L371.8,603.8 L373.8,603.9 L375.8,605.0 L377.9,604.4 L379.9,603.4 L381.9,604.3 L384.0,604.7 L386.0,603.9 L390.0,415.5 L392.0,416.0 L394.0,416.5 L396.1,416.5 L398.1,416.1 L400.1,416.4 L402.1,417.0 L404.1,416.1 L406.2,417.0 L408.2,417.0 L410.2,416.4 L412.2,416.7 L414.2,417.7 L416.3,416.9 L418.3,416.3 L420.3,417.3 L422.3,417.5 L424.3,417.1 L426.4,416.9 L428.4,418.1 L430.4,418.0 L432.4,417.4 L434.4,418.2 L436.5,418.0 L438.5,417.4 L440.5,418.1 L442.5,418.3 L444.6,417.9 L446.6,417.6 L448.6,418.1 L450.6,419.2 L452.6,418.6 L454.7,418.3 L456.7,418.9 L458.7,418.9 L460.7,418.8 L462.7,419.1 L464.8,419.7 L466.8,418.9 L468.8,419.3 L470.8,419.8 L472.8,419.3 L474.9,419.1 L476.9,420.2 L478.9,419.7 L480.9,419.1 L482.9,419.8 L485.0,420.6 L487.0,419.4 L489.0,419.2 L493.5,607.1 L495.5,607.5 L497.5,606.2 L499.5,607.0 L501.5,607.5 L503.5,606.5 L505.5,606.5 L507.5,607.6 L509.5,606.9 L511.5,606.3 L513.5,606.4 L515.6,607.0 L517.6,606.2 L519.6,606.3 L521.6,606.8 L523.6,606.9 L525.6,606.4 L527.6,606.6 L529.6,606.5 L531.6,606.0 L533.6,606.4 L535.6,606.5 L537.6,606.7 L539.6,605.8 L541.6,606.6 L543.6,606.2 L545.6,605.4 L547.6,606.2 L549.6,606.3 L551.6,605.8 L553.6,605.9 L555.7,605.9 L557.7,605.8 L559.7,605.1 L561.7,605.6 L563.7,606.6 L565.7,605.6 L567.7,605.4 L569.7,606.3 L571.7,605.5 L573.7,605.1 L575.7,605.5 L577.7,606.1 L579.7,605.2 L581.7,605.2 L583.7,605.8 L585.7,605.6 L587.7,605.4 L589.7,605.6 L591.7,605.8 L593.8,604.9 L595.8,604.9 L597.8,605.1 L599.8,605.1 L601.8,604.9 L603.8,604.6 L605.8,605.8 L607.8,604.4 L609.8,604.8 L611.8,605.5 L613.8,605.3 L615.8,604.7 L617.8,604.5 L619.8,605.5 L621.8,604.9 L623.8,604.2 L625.8,605.3 L627.8,604.4 L629.8,604.4 L631.8,604.7 L633.9,604.6 L635.9,604.2 L637.9,604.1 L639.9,605.1 L641.9,604.7 L643.9,604.2 L645.9,604.4 L647.9,604.8 L649.9,604.2 L651.9,604.0 L653.9,604.4 L655.9,604.2 L657.9,603.3 L659.9,604.4 L661.9,604.7 L663.9,603.7 L665.9,603.3 L667.9,604.5 L669.9,604.3 L671.9,603.3 L674.0,604.3 L676.0,604.1 L678.0,603.9 L680.0,603.4 L682.0,603.7 L684.0,603.6 L686.0,603.0 L688.0,604.1 L690.0,604.4 L692.0,603.6 L694.0,603.3 L699.0,415.2 L701.0,414.5 L703.0,415.1 L705.0,416.0 L707.0,414.8 L709.0,414.6 L711.1,415.8 L713.1,415.6 L715.1,415.2 L717.1,415.4 L719.1,415.5 L721.1,415.7 L723.1,415.0 L725.1,415.5 L727.1,415.5 L729.1,415.4 L731.2,415.6 L733.2,415.7 L735.2,415.9 L737.2,415.8 L739.2,415.7 L741.2,416.3 L743.2,415.2 L745.2,415.9 L747.2,416.8 L749.2,416.2 L751.3,415.5 L753.3,416.5 L755.3,416.3 L757.3,416.0 L759.3,416.6 L761.3,416.2 L763.3,415.8 L765.3,415.9 L767.3,417.1 L769.4,416.2 L771.4,416.3 L773.4,416.9 L775.4,416.9 L777.4,416.4 L779.4,416.7 L781.4,417.2 L783.4,417.2 L785.4,416.5 L787.4,416.9 L789.5,417.4 L791.5,416.9 L793.5,416.3 L795.5,417.5 L797.5,417.4 L799.5,417.0 L801.5,417.4 L803.5,417.4 L805.5,417.1 L807.5,417.0 L809.5,417.3 L811.6,417.3 L813.6,416.7 L815.6,417.7 L817.6,418.0 L819.6,417.4 L821.6,416.8 L823.6,418.0 L825.6,417.7 L827.6,416.9 L829.6,418.0 L831.7,418.1 L833.7,417.1 L835.7,417.9 L837.7,417.9 L839.7,417.3 L841.7,417.4 L843.7,418.0 L845.7,418.6 L847.7,418.0 L849.8,418.1 L851.8,418.1 L853.8,418.0 L855.8,417.8 L857.8,418.4 L859.8,418.1 L861.8,417.8 L863.8,418.2 L865.8,419.2 L867.8,418.5 L869.9,418.4 L871.9,418.4 L873.9,418.4 L875.9,418.1 L877.9,418.6 L879.9,418.9 L881.9,418.5 L883.9,418.7 L885.9,419.0 L887.9,419.3 L890.0,418.0 L892.0,418.4 L894.0,419.4 L896.0,418.3 L898.0,418.7 L900.0,419.5 L904.5,607.4 L906.5,606.9 L908.5,606.7 L910.5,607.3 L912.5,606.8 L914.6,606.4 L916.6,606.8 L918.6,606.7 L920.6,605.9 L922.6,606.2 L924.6,607.1 L926.6,606.1 L928.6,606.0 L930.6,606.6 L932.6,606.7 L934.7,606.2 L936.7,605.9 L938.7,606.0 L940.7,605.9 L942.7,605.6 L944.7,605.6 L946.7,605.8 L948.7,605.6 L950.7,605.9 L952.7,605.6 L954.8,605.2 L956.8,604.8 L958.8,605.4 L960.8,605.6 L962.8,604.9 L964.8,604.9 L966.8,605.3 L968.8,604.6 L970.8,604.2 L972.8,605.4 L974.9,605.4 L976.9,604.1 L978.9,604.5 L980.9,605.6 L982.9,604.9 L984.9,604.2 L986.9,604.5 L988.9,604.9 L990.9,604.2 L992.9,603.9 L995.0,604.3 L997.0,603.6 L999.0,604.0 L1001.0,604.6 L1003.0,603.9 L1006.0,417.2 L1008.0,417.1 L1010.0,417.1 L1012.0,416.5 L1014.0,417.2 L1016.0,417.1 L1018.0,417.0 L1020.0,417.5 L1022.0,417.3 L1024.0,417.0 L1026.0,416.6 L1028.0,417.4 L1030.0,418.0 L1032.0,417.1 L1034.0,417.4 L1036.0,418.0 L1038.0,417.6 L1040.0,417.4 L1042.0,417.7 L1044.0,418.1 L1046.0,416.8 L1048.0,417.7 L1050.0,418.0 L1052.0,417.6 L1054.0,417.3 L1056.0,418.4 L1058.0,417.6 L1060.0,417.7 L1062.0,417.6 L1064.0,418.2 L1066.0,417.4 L1068.0,417.3 L1070.0,417.9 L1072.0,418.6 L1074.0,417.6 L1076.0,418.0 L1078.0,418.2 L1080.0,417.6 L1082.0,417.8 L1084.0,418.3 L1086.0,418.1 L1088.0,418.0 L1090.0,418.1 L1092.0,419.2 L1094.0,418.6 L1096.0,418.1 L1098.0,419.1 L1100.0,418.8 L1102.0,418.2 L1104.0,418.3 L1106.0,419.3 L1108.0,418.8 L1110.0,418.5 L1112.0,419.0 L1114.0,418.5 L1116.0,418.7 L1118.0,418.9 L1120.0,419.3 L1122.0,418.3 L1124.0,419.0 L1126.0,419.1 L1128.0,419.0 L1130.0,418.4 L1132.0,419.5 L1134.0,419.1 L1136.0,419.2 L1138.0,418.9 L1140.0,419.6 L1142.0,419.4 L1144.0,419.0 L1146.0,419.0 L1148.0,419.3 L1150.0,418.6 L1152.0,418.9 L1154.0,419.4 L1156.0,419.7 L1158.0,419.0 L1160.0,419.1 L1162.0,419.5 L1164.0,419.3 L1166.0,419.4 L1168.0,420.1 L1170.0,419.7 L1172.0,419.5 L1174.0,420.1 L1176.0,420.1 L1178.0,419.8 L1180.0,419.3 L1182.0,420.1 L1184.0,420.1 L1186.0,419.1 L1188.0,420.4 L1190.0,420.7 L1192.0,420.0 L1194.0,419.7 L1196.0,420.3 L1198.0,419.9 L1200.0,419.5 L1202.0,420.5 L1204.0,420.2 L1206.0,419.6 L1208.0,419.8 L1210.0,420.5 L1212.0,420.4 L1214.0,420.2 L1216.0,420.1 L1218.0,420.4 L1220.0,420.3 L1222.0,420.3 L1224.0,420.7 L1226.0,420.3 L1228.0,419.7 L1230.0,420.7 L1232.0,421.3 L1234.0,419.9 L1236.0,420.2 L1238.0,420.7 L1240.0,420.8 L1242.0,419.9 L1244.0,420.8 L1246.0,421.0 L1248.0,420.9 L1250.0,421.0 L1252.0,421.2 L1254.0,421.0 L1256.0,420.2 L1258.0,421.1 L1262.0,606.0 L1264.0,605.3 L1266.0,606.3 L1268.0,606.7 L1270.0,606.1 L1272.0,605.4" fill="none" stroke="#b8f27e" stroke-width="1.25" stroke-linejoin="round"/>
<line x1="643.5" y1="353" x2="643.5" y2="382" stroke="#a0a0a0" stroke-width="1" opacity=".8"/>
<line x1="643.5" y1="616" x2="643.5" y2="653" stroke="#a0a0a0" stroke-width="1" opacity=".5"/>
<line x1="643.5" y1="382" x2="643.5" y2="616" stroke="#c0c8d0" stroke-width="1" opacity=".3"/>
<line x1="641" y1="352.5" x2="646" y2="352.5" stroke="#a0a0a0" stroke-width="1" opacity=".8"/>
<line x1="641" y1="360.0" x2="646" y2="360.0" stroke="#a0a0a0" stroke-width="1" opacity=".8"/>
<line x1="641" y1="367.6" x2="646" y2="367.6" stroke="#a0a0a0" stroke-width="1" opacity=".8"/>
<line x1="641" y1="375.1" x2="646" y2="375.1" stroke="#a0a0a0" stroke-width="1" opacity=".8"/>
<line x1="641" y1="623.4" x2="646" y2="623.4" stroke="#a0a0a0" stroke-width="1" opacity=".8"/>
<line x1="641" y1="630.9" x2="646" y2="630.9" stroke="#a0a0a0" stroke-width="1" opacity=".8"/>
<line x1="641" y1="638.5" x2="646" y2="638.5" stroke="#a0a0a0" stroke-width="1" opacity=".8"/>
<line x1="641" y1="646.0" x2="646" y2="646.0" stroke="#a0a0a0" stroke-width="1" opacity=".8"/>
<text x="643.5" y="393" class="lbl" font-size="11.2" text-anchor="middle">Burst&#160;&#160;6: 103 Trans for 196 Bits and 17 Words</text>
<text x="594" y="408" class="lbl" font-size="11" text-anchor="middle">Data = 0x65</text>
<text x="132" y="429" class="lbl" font-size="11" text-anchor="middle">PrePad = 0x00</text>
<text x="1107" y="429" class="lbl" font-size="11" text-anchor="middle">PostPad = 0x03</text>
</g>
<rect x="17.5" y="352.5" width="1252.0" height="301.0" class="bd"/>
<polygon points="643.5,339.5 639.5,347 647.5,347" fill="#9ae6f0"/>
<text x="4.6" y="603.3" class="lbl" font-size="9.6" style="fill:#b0ea70">Z4</text>
<rect x="7" y="606.5" width="10" height="1.5" fill="#a8e060"/>
<path d="M11.3,658.5 L14.5,655.3 M11.3,658.5 L14.5,661.7 M11.5,658.5 L18.2,658.5" stroke="#c4ee48" stroke-width="1.1" fill="none"/>
</svg>
<div id="tbl"></div>
<div style="position:absolute;left:4px;top:664px;width:39px;height:15px;background:#b4f0fa"></div>
<div class="th" style="left:5px;color:#000">NRZ</div>
<div class="th" style="left:45px;color:#f4f4f4">Time</div>
<div class="vsep" style="left:43px"></div>
<div class="th" style="left:135.5px;color:#f4f4f4">Sync</div>
<div class="vsep" style="left:133px"></div>
<div class="th" style="left:195px;color:#f4f4f4">PrePad</div>
<div class="vsep" style="left:193px"></div>
<div class="th" style="left:245px;color:#f4f4f4">Data</div>
<div class="vsep" style="left:243px"></div>
<div class="th" style="left:465px;color:#f4f4f4">Post...</div>
<div class="vsep" style="left:463px"></div>
<div class="th" style="left:515px;color:#f4f4f4">IFG</div>
<div class="vsep" style="left:513px"></div>
<div class="th" style="left:575px;color:#f4f4f4">Status</div>
<div class="vsep" style="left:573px"></div>
<div class="hsep" style="top:679px"></div>
<div class="td" style="left:5px;top:680.8px">1</div>
<div class="td" style="left:45px;top:680.8px">-218.518731...</div>
<div class="td" style="left:135.5px;top:680.8px">100.00...</div>
<div class="td" style="left:195px;top:680.8px">00 00...</div>
<div class="td" style="left:245px;top:680.8px">00 00 4c 65 43 72 6f 79 20 55 41 52...</div>
<div class="td" style="left:465px;top:680.8px">03 03...</div>
<div class="td" style="left:515px;top:680.8px">31.481...</div>
<div class="td" style="left:575px;top:680.8px">Burst&#160;&#160;&#160;1:&#160;&#160;99 Trans for 196 Bits and 17 Words</div>
<div class="hsep" style="top:695px"></div>
<div class="td" style="left:5px;top:696.8px">2</div>
<div class="td" style="left:45px;top:696.8px">-174.827331...</div>
<div class="td" style="left:135.5px;top:696.8px">100.00...</div>
<div class="td" style="left:195px;top:696.8px">00 00...</div>
<div class="td" style="left:245px;top:696.8px">00 00 4c 65 43 72 6f 79 20 55 41 52...</div>
<div class="td" style="left:465px;top:696.8px">03 03...</div>
<div class="td" style="left:515px;top:696.8px">41.651...</div>
<div class="td" style="left:575px;top:696.8px">Burst&#160;&#160;&#160;2: 103 Trans for 211 Bits and 19 Words</div>
<div class="hsep" style="top:711px"></div>
<div class="td" style="left:5px;top:712.8px">3</div>
<div class="td" style="left:45px;top:712.8px">-131.145929...</div>
<div class="td" style="left:135.5px;top:712.8px">100.00...</div>
<div class="td" style="left:195px;top:712.8px">00 00...</div>
<div class="td" style="left:245px;top:712.8px">00 00 4c 65 43 72 6f 79 20 55 41 52...</div>
<div class="td" style="left:465px;top:712.8px">03 03...</div>
<div class="td" style="left:515px;top:712.8px">41.488...</div>
<div class="td" style="left:575px;top:712.8px">Burst&#160;&#160;&#160;3: 101 Trans for 196 Bits and 17 Words</div>

<div id="bpanel"></div>
<div id="z4box"></div>
<div class="badge" style="left:6px;top:735px;width:24px;background:#8cf03a;box-shadow:0 0 0 1px #1c3a10">Z4</div>
<div class="rt" style="right:1182px;top:735px">zoom(M3)</div>
<div class="rt" style="right:1182px;top:752px">1.00 V/div</div>
<div class="rt" style="right:1182px;top:766px">12.2 µs/div</div>
<div id="m3box"></div>
<div class="badge" style="left:105px;top:734.5px;width:26px;background:#b2eef4;border-radius:0 0 3px 0">M3</div>
<div class="rt" style="right:1082px;top:751px">1.00 V/div</div>
<div class="rt" style="right:1082px;top:764px">50.0 ms/div</div>
<div class="ibox" style="left:1064px;width:110px"><div class="ihead"></div></div>
<div class="lt" style="left:1066px;top:734px;font-weight:bold">Timebase</div>
<div class="rt" style="right:108px;top:734px">0 ns</div>
<div class="rt" style="right:108px;top:751px">200 ns/div</div>
<div class="lt" style="left:1066px;top:764px">5 kS</div>
<div class="rt" style="right:110px;top:764px">2.5 GS/s</div>
<div class="ibox" style="left:1179px;width:96px"><div class="ihead"></div></div>
<div class="lt" style="left:1181px;top:734px;font-weight:bold">Trigger</div>
<div class="tag" style="left:1234px;width:17px">C1</div>
<div class="tag" style="left:1252px;width:19px">DC</div>
<div class="lt" style="left:1181px;top:751px">Stop</div>
<div class="rt" style="right:7px;top:751px">0.0 mV</div>
<div class="lt" style="left:1181px;top:764px">Edge</div>
<div class="rt" style="right:7px;top:764px">Positive</div>
<div id="gline"></div>
<div id="footer"></div>
<div id="logo"><span style="font-weight:bold">TELEDYNE</span> <span style="color:#d8d8d8;font-size:15.5px;letter-spacing:.4px">LECROY</span></div>
<div class="lt" style="left:1145px;top:785px;font-size:12px;color:#eaeaea">2/7/2013 12:24:20 PM</div>
<div class="sbtn" style="top:664px"><svg width="29" height="30"><polygon points="0.3,21 13.4,7 26.5,21" fill="#ececec"/></svg></div>
<div class="sbtn" style="top:699px"><svg width="29" height="30"><polygon points="0.3,7 13.4,21 26.5,7" fill="#ececec"/></svg></div>
</body></html>
